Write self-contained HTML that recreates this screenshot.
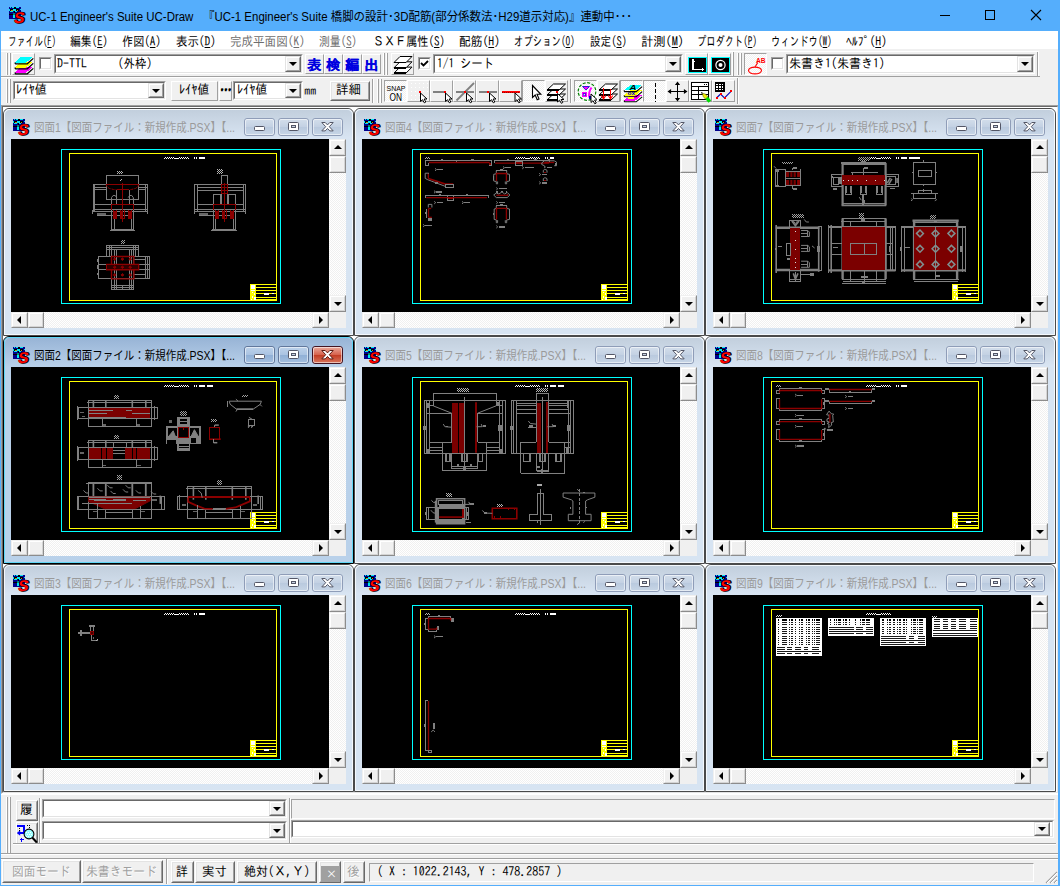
<!DOCTYPE html>
<html lang="ja"><head><meta charset="utf-8"><title>UC-1 Engineer's Suite UC-Draw</title>
<style>
*{box-sizing:border-box;margin:0;padding:0}
html,body{width:1060px;height:886px;overflow:hidden;background:#f0f0f0}
body{position:relative;font-family:"IPAGothic","Liberation Mono","Noto Sans CJK JP",monospace;font-size:12px;color:#000;line-height:1}
.a{position:absolute}
.t{position:absolute;white-space:nowrap;transform-origin:0 0;line-height:12px;height:12px}
.ui{font-family:"Liberation Sans","Noto Sans CJK JP",sans-serif}
#title{left:0;top:0;width:1060px;height:31px;background:#55aefc}
#menu{left:1px;top:31px;width:1058px;height:18px;background:#fff}
.sunk{border:1px solid;border-color:#a0a0a0 #fff #fff #a0a0a0;background:#fff}
.sunk>i{position:absolute;left:0;top:0;right:0;bottom:0;border:1px solid;border-color:#696969 #e3e3e3 #e3e3e3 #696969}
.btn{background:#f0f0f0;border:1px solid;border-color:#fff #696969 #696969 #fff}
.btn>i{position:absolute;left:0;top:0;right:0;bottom:0;border:1px solid;border-color:#e3e3e3 #a0a0a0 #a0a0a0 #e3e3e3}
.btn2{background:#f0f0f0;border:1px solid;border-color:#fff #a0a0a0 #a0a0a0 #fff}
.press{border:1px solid;border-color:#a0a0a0 #fff #fff #a0a0a0;background-color:#f8f8f8;background-image:conic-gradient(#fff 25%,#f0f0f0 0 50%,#fff 0 75%,#f0f0f0 0);background-size:2px 2px}
.dd{background:#f0f0f0;border:1px solid;border-color:#e3e3e3 #696969 #696969 #e3e3e3}
.dd>i{position:absolute;left:0;top:0;right:0;bottom:0;border:1px solid;border-color:#fff #a0a0a0 #a0a0a0 #fff}
.dd>b{position:absolute;left:50%;top:50%;margin:-2px 0 0 -4px;width:0;height:0;border:4px solid transparent;border-top-color:#000;border-bottom:0}
.grip{width:2px;border-left:1px solid #fff;border-right:1px solid #a0a0a0}
.win{background:#d7e4f2;border:1px solid #4a4a4a;border-radius:6px 6px 0 0}
.win>.hl{position:absolute;left:0;top:0;right:0;bottom:0;border:1px solid #f4f8fc;border-radius:5px 5px 0 0}
.win>.cap{position:absolute;left:1px;right:1px;top:1px;height:29px;border-radius:5px 5px 0 0;background:linear-gradient(#c2cfdd,#d9e5f3)}
.win.act{background:#b9d1ea;border-color:#000}
.win.act>.hl{border-color:#5fd6f6}
.win.act>.cap{background:linear-gradient(#98b4d6,#b9d1ea)}
.win .ttl{position:absolute;left:30px;top:12px;font-family:"Liberation Sans","Noto Sans CJK JP",sans-serif;font-size:12px;line-height:14px;color:#9a9a9a;white-space:nowrap;transform-origin:0 0}
.win.act .ttl{color:#000}
.cb{position:absolute;top:9px;height:18px;width:31px;border:1px solid #8f9db8;border-radius:3px;background:linear-gradient(#d3deeb,#c3d1e3 50%,#b9c9de 50%,#c7d5e6)}
.cb>u{position:absolute;left:0;top:0;right:0;bottom:0;border:1px solid rgba(255,255,255,.55);border-radius:2px}
.win.act .cb{border-color:#62789c;background:linear-gradient(#bdd2ea,#a9c3e2 50%,#90b0d6 50%,#a5c0e0)}
.cb>svg{top:1px !important}
.win.act .cb.red{border-color:#431422;background:linear-gradient(#e9a99c,#d6604a 50%,#c23b22 50%,#d8755c)}
.canvas{position:absolute;background:#000;overflow:hidden}
.sb{position:absolute;background-color:#f8f8f8;background-image:conic-gradient(#fff 25%,#f0f0f0 0 50%,#fff 0 75%,#f0f0f0 0);background-size:2px 2px}
.sbb{position:absolute;background:#f0f0f0;border:1px solid;border-color:#f0f0f0 #8c8c8c #8c8c8c #f0f0f0}
.sbb>i{position:absolute;left:0;top:0;right:0;bottom:0;border:1px solid;border-color:#fff #d4d4d4 #d4d4d4 #fff}
.sbb>b{position:absolute;left:50%;top:50%;width:0;height:0;border:4px solid transparent}
.sbb>b.u{margin:-3px 0 0 -4px;border-bottom-color:#000;border-top:0}
.sbb>b.d{margin:-2px 0 0 -4px;border-top-color:#000;border-bottom:0}
.sbb>b.l{margin:-4px 0 0 -3px;border-right-color:#000;border-left:0}
.sbb>b.r{margin:-4px 0 0 -2px;border-left-color:#000;border-right:0}
svg{position:absolute;left:0;top:0;overflow:visible}
</style></head>
<body>
<svg width="0" height="0" style="position:absolute"><defs><pattern id="hxw" width="2" height="2" patternUnits="userSpaceOnUse"><rect width="1" height="1" fill="#fff"/><rect x="1" y="1" width="1" height="1" fill="#fff"/></pattern><pattern id="hx9" width="2" height="2" patternUnits="userSpaceOnUse"><rect width="1" height="1" fill="#a0a0a0"/><rect x="1" y="1" width="1" height="1" fill="#a0a0a0"/></pattern><pattern id="hxa" width="2" height="2" patternUnits="userSpaceOnUse"><rect width="1" height="1" fill="#b4b4b4"/><rect x="1" y="1" width="1" height="1" fill="#b4b4b4"/></pattern><pattern id="hxd" width="2" height="2" patternUnits="userSpaceOnUse"><rect width="1" height="1" fill="#e0e0e0"/><rect x="1" y="1" width="1" height="1" fill="#e0e0e0"/></pattern></defs></svg>
<div class="a" id="title"></div>
<svg class="a" style="left:9px;top:7px" width="16" height="16" viewBox="0 0 16 16"><rect x="0" y="0" width="12" height="12" fill="#00008c"/><path d="M1 0h1v1h-1zM3 0h2v1h-2zM7 0h3v1h-3zM0 2h1v2h-1zM4 2h3v2h-3zM11 2h1v1h-1zM1 4h3v1h-3zM6 4h2v1h-2zM4 8h2v3h-2zM5 6h1v1h-1z" fill="#00e8f0"/><path d="M5 0h2v2h-2zM1 2h3v2h-3zM7 2h3v2h-3zM0 7h4v1h-4zM5 4h1v2h-1z" fill="#000"/><path d="M2 3h2v1h-2zM8 3h1v1h-1z" fill="#b89020"/><path d="M4 6h2v2h-2z" fill="#008878"/><g transform="translate(3.5 0) skewX(-10)"><text x="4.6" y="16.2" font-family="Liberation Sans,sans-serif" font-size="15.5" font-weight="bold" fill="#000" stroke="#000" stroke-width="1.1">S</text><text x="3.6" y="15.6" font-family="Liberation Sans,sans-serif" font-size="15.5" font-weight="bold" fill="#f00">S</text></g></svg>
<span class="t ui" id="ttxt" style="left:30px;top:10px;line-height:15px;height:15px;transform:scaleX(0.9555)">UC-1 Engineer's Suite UC-Draw&nbsp;&nbsp;&nbsp;『UC-1 Engineer's Suite 橋脚の設計･3D配筋(部分係数法･H29道示対応)』連動中･･･</span>
<svg class="a" style="left:930px;top:0" width="130" height="31" viewBox="0 0 130 31" shape-rendering="crispEdges"><path d="M10 15.5h10M55.5 10.5h9v9h-9z" stroke="#000" fill="none"/><path d="M101 10l10 10M111 10l-10 10" stroke="#000" fill="none" shape-rendering="auto" stroke-width="1.1"/></svg>
<div class="a" id="menu"></div>
<span class="t" id="t1" style="left:7.5px;top:34.5px;font-size:13px;line-height:13px;height:13px;transform:scaleX(0.6713);">ファイル(<u>F</u>)</span>
<span class="t" id="t2" style="left:69.5px;top:34.5px;font-size:13px;line-height:13px;height:13px;transform:scaleX(0.8352);">編集(<u>E</u>)</span>
<span class="t" id="t3" style="left:121.5px;top:34.5px;font-size:13px;line-height:13px;height:13px;transform:scaleX(0.8571);">作図(<u>A</u>)</span>
<span class="t" id="t4" style="left:175.5px;top:34.5px;font-size:13px;line-height:13px;height:13px;transform:scaleX(0.8791);">表示(<u>D</u>)</span>
<span class="t" id="t5" style="left:229.5px;top:34.5px;font-size:13px;line-height:13px;height:13px;transform:scaleX(0.8876);color:#6d6d6d;">完成平面図(<u>K</u>)</span>
<span class="t" id="t6" style="left:318.5px;top:34.5px;font-size:13px;line-height:13px;height:13px;transform:scaleX(0.8352);color:#6d6d6d;">測量(<u>S</u>)</span>
<span class="t" id="t7" style="left:372.5px;top:34.5px;font-size:13px;line-height:13px;height:13px;transform:scaleX(0.8521);">ＳＸＦ属性(<u>S</u>)</span>
<span class="t" id="t8" style="left:458.5px;top:34.5px;font-size:13px;line-height:13px;height:13px;transform:scaleX(0.9011);">配筋(<u>H</u>)</span>
<span class="t" id="t9" style="left:513.5px;top:34.5px;font-size:13px;line-height:13px;height:13px;transform:scaleX(0.7219);">オプション(<u>O</u>)</span>
<span class="t" id="t10" style="left:589.5px;top:34.5px;font-size:13px;line-height:13px;height:13px;transform:scaleX(0.8132);">設定(<u>S</u>)</span>
<span class="t" id="t11" style="left:640.5px;top:34.5px;font-size:13px;line-height:13px;height:13px;transform:scaleX(0.9451);">計測(<u>M</u>)</span>
<span class="t" id="t12" style="left:696.5px;top:34.5px;font-size:13px;line-height:13px;height:13px;transform:scaleX(0.7101);">プロダクト(<u>P</u>)</span>
<span class="t" id="t13" style="left:770.5px;top:34.5px;font-size:13px;line-height:13px;height:13px;transform:scaleX(0.7219);">ウィンドウ(<u>W</u>)</span>
<span class="t" id="t14" style="left:845.5px;top:34.5px;font-size:13px;line-height:13px;height:13px;transform:scaleX(0.9011);">ﾍﾙﾌﾟ(<u>H</u>)</span>
<div class="a" style="left:1px;top:51px;width:1038px;height:1px;background:#fff"></div>
<div class="a" style="left:1px;top:76px;width:1039px;height:1px;background:#a0a0a0"></div>
<div class="a" style="left:1px;top:77px;width:737px;height:1px;background:#fff"></div>
<div class="a grip" style="left:6px;top:53px;height:22px"></div>
<div class="a grip" style="left:9px;top:53px;height:22px"></div>
<div class="a btn2" style="left:12px;top:53px;width:23px;height:22px"><i></i></div>
<svg class="a" style="left:12px;top:53px" width="24" height="24" viewBox="0 0 24 24" shape-rendering="crispEdges"><path d="M9 14h11.5l-6.3 5.6h-11.5z" fill="#f0f"/><path d="M2.7 19.6l1 1.2h11.6l6-5.4" fill="none" stroke="#000" stroke-width="1.2" shape-rendering="auto"/><path d="M9 9h11.5l-6.3 5.6h-11.5z" fill="#ff0"/><path d="M2.7 14.6l1 1.2h11.6l6-5.4" fill="none" stroke="#000" stroke-width="1.2" shape-rendering="auto"/><path d="M9 4h11.5l-6.3 5.6h-11.5z" fill="#0ff"/><path d="M2.7 9.6l1 1.2h11.6l6-5.4" fill="none" stroke="#000" stroke-width="1.2" shape-rendering="auto"/></svg>
<div class="a sunk" style="left:39px;top:57px;width:13px;height:13px"><i></i></div>
<div class="a sunk" style="left:54px;top:54px;width:249px;height:20px"><i></i></div>
<div class="a dd" style="left:285px;top:56px;width:16px;height:16px"><i></i><b></b></div>
<span class="t" id="t15" style="left:57.3px;top:57.0px;font-size:13px;line-height:13px;height:13px;transform:scaleX(0.9231);">D-TTL</span>
<span class="t" id="t16" style="left:112.0px;top:57.0px;font-size:13px;line-height:13px;height:13px;transform:scaleX(0.8846);">（外枠）</span>
<div class="a btn2" style="left:305px;top:54px;width:19px;height:20px"><i></i></div>
<span class="t " style="left:307px;top:58px;font-size:14px;line-height:14px;height:14px;font-weight:bold;color:#0000e0;text-shadow:.5px 0 0 #0000e0">表</span>
<div class="a btn2" style="left:324px;top:54px;width:19px;height:20px"><i></i></div>
<span class="t " style="left:326px;top:58px;font-size:14px;line-height:14px;height:14px;font-weight:bold;color:#0000e0;text-shadow:.5px 0 0 #0000e0">検</span>
<div class="a btn2" style="left:343px;top:54px;width:19px;height:20px"><i></i></div>
<span class="t " style="left:345px;top:58px;font-size:14px;line-height:14px;height:14px;font-weight:bold;color:#0000e0;text-shadow:.5px 0 0 #0000e0">編</span>
<div class="a btn2" style="left:362px;top:54px;width:19px;height:20px"><i></i></div>
<span class="t " style="left:364px;top:58px;font-size:14px;line-height:14px;height:14px;font-weight:bold;color:#0000e0;text-shadow:.5px 0 0 #0000e0">出</span>
<div class="a grip" style="left:383px;top:53px;height:22px"></div>
<div class="a grip" style="left:386px;top:53px;height:22px"></div>
<div class="a btn2" style="left:391px;top:53px;width:23px;height:22px"><i></i></div>
<svg class="a" style="left:391px;top:53px" width="24" height="24" viewBox="0 0 24 24" shape-rendering="crispEdges"><path d="M9 14.1h12l-6 6h-12z" fill="#fff" stroke="#000" stroke-width="1" shape-rendering="auto"/><path d="M3 20.1h12" stroke="#000" stroke-width="1.6"/><path d="M9 8.8h12l-6 6h-12z" fill="#fff" stroke="#000" stroke-width="1" shape-rendering="auto"/><path d="M3 14.8h12" stroke="#000" stroke-width="1.6"/><path d="M9 3.5h12l-6 6h-12z" fill="#fff" stroke="#000" stroke-width="1" shape-rendering="auto"/><path d="M3 9.5h12" stroke="#000" stroke-width="1.6"/></svg>
<div class="a sunk" style="left:418px;top:57px;width:13px;height:13px"><i></i><svg width="11" height="11" viewBox="0 0 11 11" style="left:0;top:0"><path d="M2 5l2.5 2.5L9 3" stroke="#000" stroke-width="1.8" fill="none"/></svg></div>
<div class="a sunk" style="left:433px;top:54px;width:250px;height:20px"><i></i></div>
<div class="a dd" style="left:665px;top:56px;width:16px;height:16px"><i></i><b></b></div>
<span class="t" id="t17" style="left:437.0px;top:57.0px;font-size:13px;line-height:13px;height:13px;transform:scaleX(0.8800);">1/1 シート</span>
<div class="a btn2" style="left:685px;top:53px;width:23px;height:22px"><i></i></div>
<svg class="a" style="left:685px;top:53px" width="24" height="24" viewBox="0 0 24 24" shape-rendering="crispEdges"><rect x="3.5" y="4.5" width="18" height="15" fill="#000" stroke="#0ff"/><path d="M8 6v10.5h11M6.5 8.5h3M17.5 15v3" stroke="#fff" stroke-width="1.2" fill="none"/><path d="M17 15l2.5 1.5-2.5 1.5z" fill="#fff"/></svg>
<div class="a btn2" style="left:708px;top:53px;width:23px;height:22px"><i></i></div>
<svg class="a" style="left:708px;top:53px" width="24" height="24" viewBox="0 0 24 24" shape-rendering="crispEdges"><rect x="3.5" y="4.5" width="18" height="15" fill="#000" stroke="#0ff"/><circle cx="12.5" cy="12" r="4.6" fill="none" stroke="#fff" stroke-width="1.2" shape-rendering="auto"/><circle cx="12.5" cy="12" r="2" fill="#fff" shape-rendering="auto"/></svg>
<div class="a" style="left:732px;top:52px;width:1px;height:24px;background:#fff"></div><div class="a" style="left:733px;top:52px;width:1px;height:24px;background:#a0a0a0"></div>
<div class="a grip" style="left:737px;top:53px;height:22px"></div>
<div class="a grip" style="left:740px;top:53px;height:22px"></div>
<div class="a press" style="left:744px;top:53px;width:23px;height:22px"></div>
<svg class="a" style="left:744px;top:53px" width="24" height="24" viewBox="0 0 24 24" shape-rendering="crispEdges"><ellipse cx="11" cy="17.5" rx="6.5" ry="3.4" fill="none" stroke="#f00" stroke-width="1.1" shape-rendering="auto"/><path d="M11 14l2.8-4.5" stroke="#f00" stroke-width="1.1" shape-rendering="auto"/><text x="12" y="9.5" font-family="Liberation Sans,sans-serif" font-size="8" font-weight="bold" fill="#f00" textLength="9.5" lengthAdjust="spacingAndGlyphs">AB</text></svg>
<div class="a sunk" style="left:771px;top:57px;width:13px;height:13px"><i></i></div>
<div class="a sunk" style="left:786px;top:54px;width:249px;height:20px"><i></i></div>
<div class="a dd" style="left:1017px;top:56px;width:16px;height:16px"><i></i><b></b></div>
<span class="t" id="t18" style="left:789.1px;top:57.0px;font-size:13px;line-height:13px;height:13px;transform:scaleX(0.9240);">朱書き1(朱書き1)</span>
<div class="a" style="left:1037px;top:52px;width:1px;height:24px;background:#a0a0a0"></div><div class="a" style="left:1038px;top:52px;width:1px;height:24px;background:#fff"></div>
<div class="a grip" style="left:6px;top:79px;height:24px"></div>
<div class="a grip" style="left:9px;top:79px;height:24px"></div>
<div class="a sunk" style="left:13px;top:81px;width:153px;height:19px"><i></i></div>
<div class="a dd" style="left:148px;top:83px;width:16px;height:15px"><i></i><b></b></div>
<span class="t" id="t19" style="left:15.7px;top:82.5px;font-size:13px;line-height:13px;height:13px;transform:scaleX(0.9538);">ﾚｲﾔ値</span>
<div class="a btn2" style="left:171px;top:81px;width:47px;height:20px"><i></i></div>
<span class="t" id="t20" style="left:179.2px;top:82.5px;font-size:13px;line-height:13px;height:13px;transform:scaleX(0.9385);">ﾚｲﾔ値</span>
<div class="a btn2" style="left:219px;top:81px;width:13px;height:20px"><i></i></div>
<span class="t " style="left:219.5px;top:83px;transform:scaleX(0.9500);font-size:12px;font-weight:bold;text-shadow:0 .6px 0 #000,.5px 0 0 #000">…</span>
<div class="a sunk" style="left:233px;top:81px;width:70px;height:19px"><i></i></div>
<div class="a dd" style="left:285px;top:83px;width:16px;height:15px"><i></i><b></b></div>
<span class="t" id="t21" style="left:236.9px;top:82.5px;font-size:13px;line-height:13px;height:13px;transform:scaleX(0.9385);">ﾚｲﾔ値</span>
<span class="t" id="t22" style="left:304.2px;top:83.5px;font-size:12px;line-height:12px;height:12px;transform:scaleX(1.0000);">mm</span>
<div class="a btn" style="left:330px;top:81px;width:40px;height:20px"><i></i></div>
<span class="t" id="t23" style="left:335.9px;top:83.0px;font-size:13px;line-height:13px;height:13px;transform:scaleX(0.9577);">詳細</span>
<div class="a" style="left:372px;top:79px;width:1px;height:24px;background:#a0a0a0"></div><div class="a" style="left:373px;top:79px;width:1px;height:24px;background:#fff"></div>
<div class="a grip" style="left:377px;top:79px;height:24px"></div>
<div class="a grip" style="left:380px;top:79px;height:24px"></div>
<div class="a press" style="left:384px;top:80px;width:23px;height:22px"></div>
<svg class="a" style="left:384px;top:80px" width="24" height="24" viewBox="0 0 24 24" shape-rendering="crispEdges"><text x="2.5" y="10.5" font-family="Liberation Sans,sans-serif" font-size="7.5" fill="#000" textLength="19" lengthAdjust="spacingAndGlyphs">SNAP</text><text x="5.5" y="20.8" font-family="Liberation Sans,sans-serif" font-size="10" fill="#000" textLength="12.5" lengthAdjust="spacingAndGlyphs">ON</text></svg>
<div class="a btn2" style="left:407px;top:80px;width:23px;height:22px"><i></i></div>
<svg class="a" style="left:407px;top:80px" width="24" height="24" viewBox="0 0 24 24" shape-rendering="crispEdges"><path d="M4 3h1v1h-1zM4 7h1v1h-1zM4 11h1v1h-1zM4 15h1v1h-1zM4 19h1v1h-1zM8 3h1v1h-1zM8 7h1v1h-1zM8 11h1v1h-1zM8 15h1v1h-1zM8 19h1v1h-1zM12 3h1v1h-1zM12 7h1v1h-1zM12 11h1v1h-1zM12 15h1v1h-1zM12 19h1v1h-1zM16 3h1v1h-1zM16 7h1v1h-1zM16 11h1v1h-1zM16 15h1v1h-1zM16 19h1v1h-1zM20 3h1v1h-1zM20 7h1v1h-1zM20 11h1v1h-1zM20 15h1v1h-1zM20 19h1v1h-1z" fill="#fff"/><rect x="12" y="11" width="2" height="2" fill="#f00"/><path d="M13.5 13.0 L13.5 21.5 L15.5 19.7 L17.3 22.8 L18.8 22.0 L17.1 19.0 L20.0 19.0Z" fill="#fff" stroke="#000" stroke-width="1" shape-rendering="auto"/></svg>
<div class="a btn2" style="left:430px;top:80px;width:23px;height:22px"><i></i></div>
<svg class="a" style="left:430px;top:80px" width="24" height="24" viewBox="0 0 24 24" shape-rendering="crispEdges"><path d="M3 11h12v2h-12z" fill="#808080"/><rect x="14" y="11" width="2" height="2" fill="#f00"/><path d="M15.5 13.0 L15.5 21.5 L17.5 19.7 L19.3 22.8 L20.8 22.0 L19.1 19.0 L22.0 19.0Z" fill="#fff" stroke="#000" stroke-width="1" shape-rendering="auto"/></svg>
<div class="a btn2" style="left:453px;top:80px;width:23px;height:22px"><i></i></div>
<svg class="a" style="left:453px;top:80px" width="24" height="24" viewBox="0 0 24 24" shape-rendering="crispEdges"><path d="M3 11h18v2h-18z" fill="#808080"/><path d="M3.5 20.5L21 3" stroke="#808080" stroke-width="1.8" shape-rendering="auto"/><rect x="11" y="11" width="2" height="2" fill="#f00"/><path d="M13.5 13.0 L13.5 21.5 L15.5 19.7 L17.3 22.8 L18.8 22.0 L17.1 19.0 L20.0 19.0Z" fill="#fff" stroke="#000" stroke-width="1" shape-rendering="auto"/></svg>
<div class="a btn2" style="left:476px;top:80px;width:23px;height:22px"><i></i></div>
<svg class="a" style="left:476px;top:80px" width="24" height="24" viewBox="0 0 24 24" shape-rendering="crispEdges"><path d="M3 11h18v2h-18z" fill="#808080"/><rect x="11" y="11" width="2" height="2" fill="#f00"/><path d="M13.5 13.0 L13.5 21.5 L15.5 19.7 L17.3 22.8 L18.8 22.0 L17.1 19.0 L20.0 19.0Z" fill="#fff" stroke="#000" stroke-width="1" shape-rendering="auto"/></svg>
<div class="a btn2" style="left:499px;top:80px;width:23px;height:22px"><i></i></div>
<svg class="a" style="left:499px;top:80px" width="24" height="24" viewBox="0 0 24 24" shape-rendering="crispEdges"><path d="M3 11h18v2h-18z" fill="#f00"/><path d="M3 12h1v1h-1zM5 12h1v1h-1zM7 12h1v1h-1zM9 12h1v1h-1zM11 12h1v1h-1zM13 12h1v1h-1zM15 12h1v1h-1zM17 12h1v1h-1zM19 12h1v1h-1z" fill="#900"/><path d="M16.0 13.0 L16.0 21.5 L18.0 19.7 L19.8 22.8 L21.3 22.0 L19.6 19.0 L22.5 19.0Z" fill="#fff" stroke="#000" stroke-width="1" shape-rendering="auto"/></svg>
<div class="a press" style="left:522px;top:80px;width:23px;height:22px"></div>
<svg class="a" style="left:522px;top:80px" width="24" height="24" viewBox="0 0 24 24" shape-rendering="crispEdges"><path d="M10.5 5.5v12l2.7-2.5 2 4.7 1.8-.8-2-4.6h3.8z" fill="#fff" stroke="#000" stroke-width="1.1" shape-rendering="auto"/></svg>
<div class="a btn2" style="left:545px;top:80px;width:23px;height:22px"><i></i></div>
<svg class="a" style="left:545px;top:80px" width="24" height="24" viewBox="0 0 24 24" shape-rendering="crispEdges"><path d="M8.5 14h12l-6.5 6h-12z" fill="#fff" stroke="#000" stroke-width="1" shape-rendering="auto"/><path d="M2 20h12" stroke="#000" stroke-width="1.2"/><path d="M8.5 9h12l-6.5 6h-12z" fill="#fff" stroke="#000" stroke-width="1" shape-rendering="auto"/><path d="M2 15h12" stroke="#000" stroke-width="1.2"/><path d="M8.5 4h12l-6.5 6h-12z" fill="#fff" stroke="#000" stroke-width="1" shape-rendering="auto"/><path d="M2 10h12" stroke="#000" stroke-width="1.2"/><rect x="11" y="11" width="2" height="2" fill="#f00"/><path d="M12.5 13.5 L12.5 22.0 L14.5 20.2 L16.3 23.3 L17.8 22.5 L16.1 19.5 L19.0 19.5Z" fill="#fff" stroke="#000" stroke-width="1" shape-rendering="auto"/></svg>
<div class="a" style="left:570px;top:79px;width:1px;height:24px;background:#a0a0a0"></div><div class="a" style="left:571px;top:79px;width:1px;height:24px;background:#fff"></div>
<div class="a press" style="left:574px;top:80px;width:23px;height:22px"></div>
<svg class="a" style="left:574px;top:80px" width="24" height="24" viewBox="0 0 24 24" shape-rendering="crispEdges"><circle cx="13" cy="11.5" r="8.8" fill="none" stroke="#008000" stroke-width="1.2" stroke-dasharray="3 1.6" shape-rendering="auto"/><path d="M8.5 6.5h7l-3.6 3.6z" fill="#f0f" stroke="#00c" stroke-width=".8" shape-rendering="auto"/><rect x="7.5" y="12" width="5" height="5" fill="#f0f"/><rect x="9" y="13.5" width="2" height="2" fill="#dde" stroke="#00c" stroke-width=".6"/><path d="M17.5 7.5q-3.2 4.5-2.2 10" fill="none" stroke="#f0f" stroke-width="2" shape-rendering="auto"/><path d="M16 15.5v3" stroke="#00c" stroke-width="1.2"/><path d="M17.0 14.0 L17.0 22.5 L19.0 20.7 L20.8 23.8 L22.3 23.0 L20.6 20.0 L23.5 20.0Z" fill="#fff" stroke="#000" stroke-width="1" shape-rendering="auto"/></svg>
<div class="a btn2" style="left:597px;top:80px;width:23px;height:22px"><i></i></div>
<svg class="a" style="left:597px;top:80px" width="24" height="24" viewBox="0 0 24 24" shape-rendering="crispEdges"><path d="M8.5 14h12l-6.5 6h-12z" fill="#fff" stroke="#000" stroke-width="1" shape-rendering="auto"/><path d="M2 20h12" stroke="#000" stroke-width="1.2"/><path d="M8.5 9h12l-6.5 6h-12z" fill="#fff" stroke="#000" stroke-width="1" shape-rendering="auto"/><path d="M2 15h12" stroke="#000" stroke-width="1.2"/><path d="M8.5 4h12l-6.5 6h-12z" fill="#fff" stroke="#000" stroke-width="1" shape-rendering="auto"/><path d="M2 10h12" stroke="#000" stroke-width="1.2"/><path d="M6.5 8v10M13.5 9v9" stroke="#f00" stroke-width="1.2"/><path d="M4.3 15.5l2.2 3.5 2.2-3.5M11.3 15.5l2.2 3.5 2.2-3.5" stroke="#f00" stroke-width="1.1" fill="none" shape-rendering="auto"/></svg>
<div class="a press" style="left:620px;top:80px;width:23px;height:22px"></div>
<svg class="a" style="left:620px;top:80px" width="24" height="24" viewBox="0 0 24 24" shape-rendering="crispEdges"><path d="M10.5 15.2h11.5l-6.6 5.4h-11.5z" fill="#f0f"/><path d="M3.9 20.6l.8 1.2h11.5l6-5" fill="none" stroke="#000" stroke-width="1.1" shape-rendering="auto"/><path d="M10.5 10.1h11.5l-6.6 5.4h-11.5z" fill="#ff0"/><path d="M3.9 15.5l.8 1.2h11.5l6-5" fill="none" stroke="#000" stroke-width="1.1" shape-rendering="auto"/><path d="M10.5 5h11.5l-6.6 5.4h-11.5z" fill="#0ff"/><path d="M3.9 10.4l.8 1.2h11.5l6-5" fill="none" stroke="#000" stroke-width="1.1" shape-rendering="auto"/><text x="9.5" y="10" font-family="Liberation Sans,sans-serif" font-size="7.5" font-weight="bold" font-style="italic" fill="#000" textLength="7" lengthAdjust="spacingAndGlyphs">A</text><text x="7.5" y="14.8" font-family="Liberation Sans,sans-serif" font-size="6" font-weight="bold" fill="#00c" textLength="7.5" lengthAdjust="spacingAndGlyphs">ox</text><path d="M8 18h6" stroke="#ff0" stroke-width="1.4"/></svg>
<div class="a press" style="left:643px;top:80px;width:23px;height:22px"></div>
<svg class="a" style="left:643px;top:80px" width="24" height="24" viewBox="0 0 24 24" shape-rendering="crispEdges"><path d="M12.5 3v19" stroke="#000" stroke-width="1.2" stroke-dasharray="4 2"/></svg>
<div class="a btn2" style="left:666px;top:80px;width:23px;height:22px"><i></i></div>
<svg class="a" style="left:666px;top:80px" width="24" height="24" viewBox="0 0 24 24" shape-rendering="crispEdges"><path d="M11.5 3.5v16M3.5 11.5h16" stroke="#000" stroke-width="1.2"/><path d="M11.5 1.5l2.6 3.6h-5.2zM11.5 21.5l2.6-3.6h-5.2zM1.5 11.5l3.6-2.6v5.2zM21.5 11.5l-3.6-2.6v5.2z" fill="#000" shape-rendering="auto"/></svg>
<div class="a btn2" style="left:689px;top:80px;width:23px;height:22px"><i></i></div>
<svg class="a" style="left:689px;top:80px" width="24" height="24" viewBox="0 0 24 24" shape-rendering="crispEdges"><rect x="2.5" y="2.5" width="17" height="17" fill="#fff" stroke="#000" stroke-width="1.3"/><path d="M2.5 6.5h17" stroke="#000" stroke-width="1.8"/><path d="M2.5 10.5h17M2.5 14.5h17M9.5 6.5v13" stroke="#000" stroke-width="1.2"/><path d="M15 4h1v1.4h-1zM17 4h1v1.4h-1z" fill="#000"/><path d="M13.5 13.2l3.2 1 2.2 2.6-2.6 2.2-2.2-2.6z" fill="#ee0" stroke="#550" stroke-width=".5" shape-rendering="auto"/><path d="M16.3 19l2.6-2.2 3.3 3.6-2.7 2.4z" fill="#0d0" shape-rendering="auto"/><path d="M11.8 11.8l2.2 1.2-1.2 1z" fill="#000" shape-rendering="auto"/></svg>
<div class="a btn2" style="left:712px;top:80px;width:23px;height:22px"><i></i></div>
<svg class="a" style="left:712px;top:80px" width="24" height="24" viewBox="0 0 24 24" shape-rendering="crispEdges"><rect x="3.5" y="2.5" width="8.5" height="8.5" fill="#fff" stroke="#000" stroke-width="1.2"/><path d="M3.5 5.5h8.5M3.5 8.5h8.5M6.5 2.5v8.5M9.5 2.5v8.5" stroke="#000" stroke-width="1.1"/><path d="M3.5 3.2h8.5" stroke="#000" stroke-width="1.6"/><path d="M4.5 18l4-4 4 4 7-7.2" fill="none" stroke="#00b" stroke-width="1.1" shape-rendering="auto"/><path d="M3.5 17h2v2h-2zM7.5 13h2v2h-2zM11.5 17h2v2h-2zM18.2 9.8h2v2h-2z" fill="#f00"/></svg>
<div class="a" style="left:737px;top:78px;width:1px;height:26px;background:#a0a0a0"></div><div class="a" style="left:738px;top:78px;width:1px;height:26px;background:#fff"></div>
<div class="a" style="left:1px;top:105px;width:1058px;height:689px;background:#fff;border:1px solid;border-color:#a0a0a0 #fff #fff #a0a0a0"></div>
<div class="a" style="left:2px;top:106px;width:1056px;height:687px;background:#fff;border:1px solid;border-color:#696969 #e3e3e3 #e3e3e3 #696969"></div>
<div class="a win" style="left:3px;top:108px;width:351px;height:228px"><div class="hl"></div><div class="cap"></div>
<svg style="left:9px;top:10px" width="16" height="16" viewBox="0 0 16 16"><rect x="0" y="0" width="12" height="12" fill="#00008c"/><path d="M1 0h1v1h-1zM3 0h2v1h-2zM7 0h3v1h-3zM0 2h1v2h-1zM4 2h3v2h-3zM11 2h1v1h-1zM1 4h3v1h-3zM6 4h2v1h-2zM4 8h2v3h-2zM5 6h1v1h-1z" fill="#00e8f0"/><path d="M5 0h2v2h-2zM1 2h3v2h-3zM7 2h3v2h-3zM0 7h4v1h-4zM5 4h1v2h-1z" fill="#000"/><path d="M2 3h2v1h-2zM8 3h1v1h-1z" fill="#b89020"/><path d="M4 6h2v2h-2z" fill="#008878"/><g transform="translate(3.5 0) skewX(-10)"><text x="4.6" y="16.2" font-family="Liberation Sans,sans-serif" font-size="15.5" font-weight="bold" fill="#000" stroke="#000" stroke-width="1.1">S</text><text x="3.6" y="15.6" font-family="Liberation Sans,sans-serif" font-size="15.5" font-weight="bold" fill="#f00">S</text></g></svg>
<span class="ttl" id="w1" style="transform:scaleX(0.8738)">図面1【図面ファイル：新規作成.PSX】【...</span>
<div class="cb" style="left:240px"><u></u><svg width="29" height="15" viewBox="0 0 29 15" style="left:0;top:0"><rect x="9.5" y="6.5" width="10" height="4" rx="1" fill="#fff" stroke="#535666"/></svg></div>
<div class="cb" style="left:274px"><u></u><svg width="29" height="15" viewBox="0 0 29 15" style="left:0;top:0"><rect x="9.5" y="2.5" width="10" height="8" rx="1" fill="#fff" stroke="#535666"/><rect x="12.5" y="5.5" width="4" height="2" fill="#c8d4e4" stroke="#535666"/></svg></div>
<div class="cb" style="left:308px"><u></u><svg width="29" height="15" viewBox="0 0 29 15" style="left:0;top:0"><path d="M8.8 2.5h3.4l2.3 2.4 2.3-2.4h3.4l-3.9 4.2 3.9 4.2h-3.4l-2.3-2.4-2.3 2.4h-3.4l3.9-4.2z" fill="#fff" stroke="#535666" stroke-width="1" shape-rendering="auto"/></svg></div>
<div class="canvas" style="left:7px;top:30px;width:318px;height:173px"><svg width="318" height="173" viewBox="0 0 318 173" shape-rendering="crispEdges"><rect x="50.5" y="10.5" width="219" height="154" fill="none" stroke="#00ffff"/><rect x="58.5" y="14.5" width="207" height="147" fill="none" stroke="#ffff00"/><rect x="239.5" y="145.5" width="26" height="16" fill="none" stroke="#ffff00"/><rect x="239" y="145" width="6" height="17" fill="#ffff00"/><path d="M245 148.5h21M245 151.5h21M245 154.5h21M245 158.5h21M245 160.5h21" stroke="#ffff00"/><path d="M240 146h4v4h-4zM240 151h4v1h-4zM241 153h1v1h-1zM243 154h1v2h-1zM241 157h1v2h-1zM243 158h2v3h-2zM240 160h1v1h-1z" fill="#fff"/><path d="M253 154h5v2h-5zM261 154h2v1h-2z" fill="#fff"/><rect x="153" y="18" width="25" height="2" fill="url(#hxw)"/><rect x="164" y="18" width="3" height="2" fill="#000"/><rect x="164" y="19" width="3" height="1" fill="#fff"/><path d="M183 18h1v2h-1zM185 18h1v2h-1zM188 18h6v2h-6z" fill="#fff"/><path d="M95.2 36.3 L127.7 36.3 L127.7 60.7 L95.2 60.7Z" stroke="#808080" stroke-width="1" fill="none"/><path d="M82.4 45.1 L136.9 45.1 L136.9 72.1 L82.4 72.1Z" stroke="#808080" stroke-width="1" fill="none"/><path d="M83.9 45.1 L83.9 72.1" stroke="#808080" stroke-width="1" fill="none"/><path d="M134.8 45.1 L134.8 72.1" stroke="#808080" stroke-width="1" fill="none"/><path d="M82.4 48.8 L95.2 48.8" stroke="#808080" stroke-width="1" fill="none"/><path d="M127.7 48.8 L136.9 48.8" stroke="#808080" stroke-width="1" fill="none"/><path d="M83.9 50.8 L95.2 50.8" stroke="#808080" stroke-width="1" fill="none"/><path d="M127.7 50.8 L134.8 50.8" stroke="#808080" stroke-width="1" fill="none"/><path d="M83.9 65.4 L100.5 65.4" stroke="#808080" stroke-width="1" fill="none"/><path d="M122.3 65.4 L134.8 65.4" stroke="#808080" stroke-width="1" fill="none"/><path d="M82.4 70.9 L136.9 70.9" stroke="#808080" stroke-width="1" fill="none"/><path d="M81.3 72.1 L137.4 72.1" stroke="#808080" stroke-width="1" fill="none"/><path d="M81.7 71.1 L81.7 74.7" stroke="#808080" stroke-width="1" fill="none"/><path d="M136.0 71.1 L136.0 74.7" stroke="#808080" stroke-width="1" fill="none"/><path d="M100.5 58.6 L100.5 91.8" stroke="#808080" stroke-width="1" fill="none"/><path d="M122.3 58.6 L122.3 91.8" stroke="#808080" stroke-width="1" fill="none"/><path d="M103.1 72.1 L103.1 91.8" stroke="#808080" stroke-width="1" fill="none"/><path d="M120.3 72.1 L120.3 91.8" stroke="#808080" stroke-width="1" fill="none"/><path d="M105.7 50.8 L105.7 65.4" stroke="#808080" stroke-width="1" fill="none"/><path d="M118.2 50.8 L118.2 65.4" stroke="#808080" stroke-width="1" fill="none"/><path d="M100.5 60.7 L100.5 58.6 L102.1 56.5 L104.2 56.5 L105.7 58.6" stroke="#808080" stroke-width="1" fill="none" shape-rendering="auto"/><path d="M122.3 60.7 L122.3 58.6 L120.8 56.5 L118.7 56.5 L117.2 58.6" stroke="#808080" stroke-width="1" fill="none" shape-rendering="auto"/><path d="M98.5 91.8 L123.9 91.8" stroke="#808080" stroke-width="1" fill="none"/><path d="M99.5 90.3 L122.9 90.3" stroke="#808080" stroke-width="1" fill="none"/><path d="M111.1 90.3 L111.1 92.4" stroke="#808080" stroke-width="1" fill="none"/><path d="M85.5 76.1 L117.7 76.1" stroke="#808080" stroke-width="1" fill="none"/><rect x="85.5" y="74.2" width="9.9" height="1.5" fill="#808080" opacity=".8"/><path d="M95.2 45.1 L127.7 45.1" stroke="#8b0000" stroke-width="1" fill="none"/><path d="M105.7 50.8 L118.2 50.8" stroke="#8b0000" stroke-width="1" fill="none"/><path d="M95.2 45.1 L95.9 47.7 L98.5 49.5 L102.6 50.5 L105.7 50.8" stroke="#8b0000" stroke-width="1" fill="none" stroke-dasharray="3 1" shape-rendering="auto"/><path d="M127.7 45.1 L127.0 47.7 L124.4 49.5 L120.3 50.5 L118.2 50.8" stroke="#8b0000" stroke-width="1" fill="none" stroke-dasharray="3 1" shape-rendering="auto"/><path d="M111.4 44.1 L111.4 82.5" stroke="#8b0000" stroke-width="1" fill="none"/><path d="M100.5 65.4 L122.3 65.4" stroke="#8b0000" stroke-width="1" fill="none"/><path d="M100.5 65.4 L100.5 70.9" stroke="#8b0000" stroke-width="1" fill="none"/><path d="M122.3 65.4 L122.3 70.9" stroke="#8b0000" stroke-width="1" fill="none"/><path d="M102.1 70.9 L102.1 79.4 L105.7 79.4 L105.7 70.9" stroke="#8b0000" stroke-width="1" fill="none"/><rect x="102.9" y="72.1" width="1.6" height="6.8" fill="#8b0000"/><path d="M109.4 70.9 L109.4 79.4 L113.5 79.4 L113.5 70.9" stroke="#8b0000" stroke-width="1" fill="none"/><rect x="110.2" y="72.1" width="2.1" height="6.8" fill="#8b0000"/><path d="M117.4 70.9 L117.4 79.4 L120.8 79.4 L120.8 70.9" stroke="#8b0000" stroke-width="1" fill="none"/><rect x="118.2" y="72.1" width="1.3" height="6.8" fill="#8b0000"/><rect x="106" y="32" width="6" height="3" fill="url(#hxa)"/><rect x="109" y="40" width="2" height="2" fill="url(#hxa)"/><path d="M183.9 45.1 L234.8 45.1 L234.8 72.1 L183.9 72.1Z" stroke="#808080" stroke-width="1" fill="none"/><path d="M186.5 45.1 L186.5 72.1" stroke="#808080" stroke-width="1" fill="none"/><path d="M232.2 45.1 L232.2 72.1" stroke="#808080" stroke-width="1" fill="none"/><path d="M186.5 48.2 L232.2 48.2" stroke="#808080" stroke-width="1" fill="none"/><path d="M186.5 51.4 L232.2 51.4" stroke="#808080" stroke-width="1" fill="none"/><path d="M186.5 65.4 L202.4 65.4" stroke="#808080" stroke-width="1" fill="none"/><path d="M224.6 65.4 L232.2 65.4" stroke="#808080" stroke-width="1" fill="none"/><path d="M183.9 70.9 L234.8 70.9" stroke="#808080" stroke-width="1" fill="none"/><path d="M182.9 72.1 L235.3 72.1" stroke="#808080" stroke-width="1" fill="none"/><path d="M183.4 71.1 L183.4 74.7" stroke="#808080" stroke-width="1" fill="none"/><path d="M234.5 71.1 L234.5 74.7" stroke="#808080" stroke-width="1" fill="none"/><path d="M210.4 45.1 L210.4 36.3 L216.9 36.3 L216.9 45.1" stroke="#808080" stroke-width="1" fill="none"/><path d="M210.4 45.1 L210.4 65.4" stroke="#808080" stroke-width="1" fill="none"/><path d="M216.9 45.1 L216.9 65.4" stroke="#808080" stroke-width="1" fill="none"/><path d="M202.4 55.5 L209.9 55.5 L209.9 65.4 L202.4 65.4Z" stroke="#808080" stroke-width="1" fill="none"/><path d="M217.2 55.5 L224.6 55.5 L224.6 65.4 L217.2 65.4Z" stroke="#808080" stroke-width="1" fill="none"/><path d="M202.4 65.4 L202.4 91.8" stroke="#808080" stroke-width="1" fill="none"/><path d="M224.6 65.4 L224.6 91.8" stroke="#808080" stroke-width="1" fill="none"/><path d="M204.9 72.1 L204.9 91.8" stroke="#808080" stroke-width="1" fill="none"/><path d="M222.1 72.1 L222.1 91.8" stroke="#808080" stroke-width="1" fill="none"/><path d="M200.0 91.8 L226.0 91.8" stroke="#808080" stroke-width="1" fill="none"/><path d="M201.1 90.3 L224.9 90.3" stroke="#808080" stroke-width="1" fill="none"/><path d="M213.0 90.3 L213.0 92.4" stroke="#808080" stroke-width="1" fill="none"/><path d="M187.6 76.3 L220.3 76.3" stroke="#808080" stroke-width="1" fill="none"/><rect x="187.6" y="74.2" width="9.3" height="1.8" fill="#808080" opacity=".8"/><path d="M213.5 44.1 L213.5 82.5" stroke="#8b0000" stroke-width="1" fill="none"/><path d="M210.4 45.1 L216.9 45.1 L216.9 54.5 L210.4 54.5Z" stroke="#8b0000" stroke-width="1" fill="none"/><path d="M210.4 48.2 L216.9 48.2" stroke="#8b0000" stroke-width="1" fill="none"/><path d="M210.4 51.4 L216.9 51.4" stroke="#8b0000" stroke-width="1" fill="none"/><path d="M202.4 65.4 L224.6 65.4" stroke="#8b0000" stroke-width="1" fill="none"/><path d="M202.4 65.4 L202.4 70.9" stroke="#8b0000" stroke-width="1" fill="none"/><path d="M224.6 65.4 L224.6 70.9" stroke="#8b0000" stroke-width="1" fill="none"/><path d="M204.2 70.9 L204.2 79.4 L207.8 79.4 L207.8 70.9" stroke="#8b0000" stroke-width="1" fill="none"/><rect x="205.0" y="72.1" width="1.6" height="6.8" fill="#8b0000"/><path d="M211.4 70.9 L211.4 79.4 L215.1 79.4 L215.1 70.9" stroke="#8b0000" stroke-width="1" fill="none"/><rect x="212.3" y="72.1" width="1.5" height="6.8" fill="#8b0000"/><path d="M219.2 70.9 L219.2 79.4 L222.9 79.4 L222.9 70.9" stroke="#8b0000" stroke-width="1" fill="none"/><rect x="220.1" y="72.1" width="1.5" height="6.8" fill="#8b0000"/><rect x="206" y="30" width="6" height="5" fill="url(#hxa)"/><path d="M95.2 106.1 L127.7 106.1 L127.7 110.8 L95.2 110.8Z" stroke="#808080" stroke-width="1" fill="none"/><path d="M95.2 108.2 L127.7 108.2" stroke="#808080" stroke-width="1" fill="none"/><path d="M95.2 106.1 L95.2 117.0" stroke="#808080" stroke-width="1" fill="none"/><path d="M98.0 106.1 L98.0 117.0" stroke="#808080" stroke-width="1" fill="none"/><path d="M100.0 106.1 L100.0 117.0" stroke="#808080" stroke-width="1" fill="none"/><path d="M122.9 106.1 L122.9 117.0" stroke="#808080" stroke-width="1" fill="none"/><path d="M124.9 106.1 L124.9 117.0" stroke="#808080" stroke-width="1" fill="none"/><path d="M127.7 106.1 L127.7 117.0" stroke="#808080" stroke-width="1" fill="none"/><path d="M87.1 117.0 L138.9 117.0 L138.9 139.9 L87.1 139.9Z" stroke="#808080" stroke-width="1" fill="none"/><path d="M134.8 117.0 L134.8 139.9" stroke="#808080" stroke-width="1" fill="none"/><path d="M136.4 117.0 L136.4 139.9" stroke="#808080" stroke-width="1" fill="none"/><path d="M87.1 125.3 L95.6 125.3" stroke="#808080" stroke-width="1" fill="none"/><path d="M87.1 130.5 L95.6 130.5" stroke="#808080" stroke-width="1" fill="none"/><path d="M127.7 125.3 L138.9 125.3" stroke="#808080" stroke-width="1" fill="none"/><path d="M127.7 130.5 L138.9 130.5" stroke="#808080" stroke-width="1" fill="none"/><path d="M122.9 120.1 L134.8 120.1" stroke="#808080" stroke-width="1" fill="none"/><path d="M122.9 135.9 L134.8 135.9" stroke="#808080" stroke-width="1" fill="none"/><path d="M100.3 110.8 L100.3 150.7" stroke="#808080" stroke-width="1" fill="none"/><path d="M103.1 110.8 L103.1 150.7" stroke="#808080" stroke-width="1" fill="none"/><path d="M105.2 110.8 L105.2 150.7" stroke="#808080" stroke-width="1" fill="none"/><path d="M118.2 110.8 L118.2 150.7" stroke="#808080" stroke-width="1" fill="none"/><path d="M120.3 110.8 L120.3 150.7" stroke="#808080" stroke-width="1" fill="none"/><path d="M122.9 110.8 L122.9 150.7" stroke="#808080" stroke-width="1" fill="none"/><path d="M100.3 146.1 L122.9 146.1" stroke="#808080" stroke-width="1" fill="none"/><path d="M100.3 148.2 L122.9 148.2" stroke="#808080" stroke-width="1" fill="none"/><path d="M100.3 150.7 L122.9 150.7" stroke="#808080" stroke-width="1" fill="none"/><path d="M111.1 146.1 L111.1 150.7" stroke="#808080" stroke-width="1" fill="none"/><path d="M95.2 110.8 L95.2 117.0" stroke="#808080" stroke-width="1" fill="none"/><path d="M127.7 110.8 L127.7 117.0" stroke="#808080" stroke-width="1" fill="none"/><path d="M100.5 117.5 L122.9 117.5 L122.9 139.9 L100.5 139.9Z" stroke="#8b0000" stroke-width="1.4" fill="none" shape-rendering="auto"/><path d="M95.6 125.3 L127.7 125.3 L127.7 131.0 L95.6 131.0Z" stroke="#8b0000" stroke-width="1.2" fill="#8b0000" shape-rendering="auto"/><rect x="96.4" y="126.2" width="30.5" height="4.0" fill="#300000"/><path d="M102.3 120.1 L103.7 118.8 L105.0 120.1 L103.7 121.5Z" stroke="#8b0000" stroke-width="1" fill="#8b0000" shape-rendering="auto"/><path d="M102.3 128.2 L103.7 126.9 L105.0 128.2 L103.7 129.6Z" stroke="#8b0000" stroke-width="1" fill="#8b0000" shape-rendering="auto"/><path d="M102.3 135.9 L103.7 134.6 L105.0 135.9 L103.7 137.3Z" stroke="#8b0000" stroke-width="1" fill="#8b0000" shape-rendering="auto"/><path d="M110.1 120.1 L111.4 118.8 L112.8 120.1 L111.4 121.5Z" stroke="#8b0000" stroke-width="1" fill="#8b0000" shape-rendering="auto"/><path d="M110.1 128.2 L111.4 126.9 L112.8 128.2 L111.4 129.6Z" stroke="#8b0000" stroke-width="1" fill="#8b0000" shape-rendering="auto"/><path d="M110.1 135.9 L111.4 134.6 L112.8 135.9 L111.4 137.3Z" stroke="#8b0000" stroke-width="1" fill="#8b0000" shape-rendering="auto"/><path d="M117.9 120.1 L119.2 118.8 L120.6 120.1 L119.2 121.5Z" stroke="#8b0000" stroke-width="1" fill="#8b0000" shape-rendering="auto"/><path d="M117.9 128.2 L119.2 126.9 L120.6 128.2 L119.2 129.6Z" stroke="#8b0000" stroke-width="1" fill="#8b0000" shape-rendering="auto"/><path d="M117.9 135.9 L119.2 134.6 L120.6 135.9 L119.2 137.3Z" stroke="#8b0000" stroke-width="1" fill="#8b0000" shape-rendering="auto"/><rect x="110" y="101" width="4" height="4" fill="url(#hx9)"/><path d="M86.2 120.1 L86.2 122.7" stroke="#808080" stroke-width="1" fill="none"/><path d="M86.2 126.4 L86.2 130.0" stroke="#808080" stroke-width="1" fill="none"/><path d="M86.2 134.1 L86.2 136.2" stroke="#808080" stroke-width="1" fill="none"/></svg></div>
<div class="sb" style="left:325px;top:30px;width:17px;height:173px"></div>
<div class="sbb" style="left:325px;top:30px;width:17px;height:17px"><i></i><b class="u"></b></div>
<div class="sbb" style="left:325px;top:47px;width:17px;height:17px"><i></i></div>
<div class="sbb" style="left:325px;top:186px;width:17px;height:17px"><i></i><b class="d"></b></div>
<div class="sb" style="left:7px;top:203px;width:318px;height:16px"></div>
<div class="sbb" style="left:7px;top:203px;width:17px;height:16px"><i></i><b class="l"></b></div>
<div class="sbb" style="left:24px;top:203px;width:16px;height:16px"><i></i></div>
<div class="sbb" style="left:308px;top:203px;width:17px;height:16px"><i></i><b class="r"></b></div>
<div class="a" style="left:325px;top:203px;width:17px;height:16px;background:#f0f0f0"></div>
</div>
<div class="a win act" style="left:3px;top:336px;width:351px;height:228px"><div class="hl"></div><div class="cap"></div>
<svg style="left:9px;top:10px" width="16" height="16" viewBox="0 0 16 16"><rect x="0" y="0" width="12" height="12" fill="#00008c"/><path d="M1 0h1v1h-1zM3 0h2v1h-2zM7 0h3v1h-3zM0 2h1v2h-1zM4 2h3v2h-3zM11 2h1v1h-1zM1 4h3v1h-3zM6 4h2v1h-2zM4 8h2v3h-2zM5 6h1v1h-1z" fill="#00e8f0"/><path d="M5 0h2v2h-2zM1 2h3v2h-3zM7 2h3v2h-3zM0 7h4v1h-4zM5 4h1v2h-1z" fill="#000"/><path d="M2 3h2v1h-2zM8 3h1v1h-1z" fill="#b89020"/><path d="M4 6h2v2h-2z" fill="#008878"/><g transform="translate(3.5 0) skewX(-10)"><text x="4.6" y="16.2" font-family="Liberation Sans,sans-serif" font-size="15.5" font-weight="bold" fill="#000" stroke="#000" stroke-width="1.1">S</text><text x="3.6" y="15.6" font-family="Liberation Sans,sans-serif" font-size="15.5" font-weight="bold" fill="#f00">S</text></g></svg>
<span class="ttl" id="w2" style="transform:scaleX(0.8738)">図面2【図面ファイル：新規作成.PSX】【...</span>
<div class="cb" style="left:240px"><u></u><svg width="29" height="15" viewBox="0 0 29 15" style="left:0;top:0"><rect x="9.5" y="6.5" width="10" height="4" rx="1" fill="#fff" stroke="#535666"/></svg></div>
<div class="cb" style="left:274px"><u></u><svg width="29" height="15" viewBox="0 0 29 15" style="left:0;top:0"><rect x="9.5" y="2.5" width="10" height="8" rx="1" fill="#fff" stroke="#535666"/><rect x="12.5" y="5.5" width="4" height="2" fill="#c8d4e4" stroke="#535666"/></svg></div>
<div class="cb red" style="left:308px"><u></u><svg width="29" height="15" viewBox="0 0 29 15" style="left:0;top:0"><path d="M8.8 2.5h3.4l2.3 2.4 2.3-2.4h3.4l-3.9 4.2 3.9 4.2h-3.4l-2.3-2.4-2.3 2.4h-3.4l3.9-4.2z" fill="#fff" stroke="#5b1a12" stroke-width="1" shape-rendering="auto"/></svg></div>
<div class="canvas" style="left:7px;top:30px;width:318px;height:173px"><svg width="318" height="173" viewBox="0 0 318 173" shape-rendering="crispEdges"><rect x="50.5" y="10.5" width="219" height="154" fill="none" stroke="#00ffff"/><rect x="58.5" y="14.5" width="207" height="147" fill="none" stroke="#ffff00"/><rect x="239.5" y="145.5" width="26" height="16" fill="none" stroke="#ffff00"/><rect x="239" y="145" width="6" height="17" fill="#ffff00"/><path d="M245 148.5h21M245 151.5h21M245 154.5h21M245 158.5h21M245 160.5h21" stroke="#ffff00"/><path d="M240 146h4v4h-4zM240 151h4v1h-4zM241 153h1v1h-1zM243 154h1v2h-1zM241 157h1v2h-1zM243 158h2v3h-2zM240 160h1v1h-1z" fill="#fff"/><path d="M253 154h5v2h-5zM261 154h2v1h-2z" fill="#fff"/><rect x="153" y="18" width="25" height="2" fill="url(#hxw)"/><rect x="164" y="18" width="3" height="2" fill="#000"/><rect x="164" y="19" width="3" height="1" fill="#fff"/><path d="M183 18h1v2h-1zM185 18h1v2h-1zM188 18h6v2h-6z" fill="#fff"/><rect x="196" y="18" width="6" height="2" fill="#fff"/><path d="M77.2 33.7 L140.0 33.7 L140.0 59.6 L77.2 59.6Z" stroke="#808080" stroke-width="1" fill="none"/><path d="M75.6 35.4 L141.0 35.4" stroke="#808080" stroke-width="1" fill="none"/><path d="M82.4 33.7 L82.4 40.4" stroke="#808080" stroke-width="1.6" fill="none" shape-rendering="auto"/><path d="M94.8 33.7 L94.8 40.4" stroke="#808080" stroke-width="1.6" fill="none" shape-rendering="auto"/><path d="M121.3 33.7 L121.3 40.4" stroke="#808080" stroke-width="1.6" fill="none" shape-rendering="auto"/><path d="M134.8 33.7 L134.8 40.4" stroke="#808080" stroke-width="1.6" fill="none" shape-rendering="auto"/><path d="M66.3 40.4 L146.7 40.4 L146.7 51.3 L66.3 51.3Z" stroke="#808080" stroke-width="1" fill="none"/><path d="M67.9 40.4 L67.9 51.3" stroke="#808080" stroke-width="1" fill="none"/><path d="M143.1 39.4 L143.1 53.4" stroke="#808080" stroke-width="1" fill="none"/><path d="M66.3 39.4 L66.3 53.4" stroke="#808080" stroke-width="1" fill="none"/><rect x="77.7" y="40.9" width="61.5" height="9.9" fill="#7b0000"/><path d="M77.7 43.2 L102.1 43.2" stroke="#808080" stroke-width="1" fill="none"/><path d="M115.1 43.2 L120.8 43.2" stroke="#808080" stroke-width="1" fill="none"/><path d="M77.7 46.1 L95.9 46.1" stroke="#808080" stroke-width="1" fill="none"/><path d="M121.3 46.1 L139.2 46.1" stroke="#808080" stroke-width="1" fill="none"/><path d="M77.2 50.8 L115.1 50.8" stroke="#808080" stroke-width="1" fill="none"/><path d="M91.2 51.3 L91.2 59.6" stroke="#808080" stroke-width="1" fill="none"/><path d="M125.5 51.3 L125.5 59.6" stroke="#808080" stroke-width="1" fill="none"/><rect x="103" y="28" width="5" height="4" fill="url(#hx9)"/><rect x="92.2" y="57.0" width="3.2" height="1.6" fill="#808080" opacity=".8"/><rect x="126.0" y="57.0" width="3.1" height="1.6" fill="#808080" opacity=".8"/><rect x="69.4" y="44.6" width="3.1" height="1.5" fill="#808080" opacity=".8"/><rect x="70.5" y="48.7" width="3.1" height="1.4" fill="#808080" opacity=".8"/><path d="M77.2 73.9 L140.0 73.9 L140.0 100.6 L77.2 100.6Z" stroke="#808080" stroke-width="1" fill="none"/><path d="M75.6 75.7 L141.0 75.7" stroke="#808080" stroke-width="1" fill="none"/><path d="M82.4 73.9 L82.4 80.9" stroke="#808080" stroke-width="1.6" fill="none" shape-rendering="auto"/><path d="M94.8 73.9 L94.8 80.9" stroke="#808080" stroke-width="1.6" fill="none" shape-rendering="auto"/><path d="M121.3 73.9 L121.3 80.9" stroke="#808080" stroke-width="1.6" fill="none" shape-rendering="auto"/><path d="M134.8 73.9 L134.8 80.9" stroke="#808080" stroke-width="1.6" fill="none" shape-rendering="auto"/><path d="M102.1 75.7 L102.1 80.9" stroke="#808080" stroke-width="1" fill="none"/><path d="M115.1 75.7 L115.1 80.9" stroke="#808080" stroke-width="1" fill="none"/><path d="M66.3 80.4 L146.7 80.4 L146.7 92.3 L66.3 92.3Z" stroke="#808080" stroke-width="1" fill="none"/><path d="M67.9 80.4 L67.9 92.3" stroke="#808080" stroke-width="1" fill="none"/><path d="M143.1 79.3 L143.1 94.4" stroke="#808080" stroke-width="1" fill="none"/><path d="M66.3 79.3 L66.3 94.4" stroke="#808080" stroke-width="1" fill="none"/><rect x="77.7" y="80.9" width="12.3" height="10.9" fill="#7b0000"/><rect x="91.2" y="80.9" width="3.6" height="10.9" fill="#7b0000"/><rect x="96.2" y="80.9" width="5.9" height="10.9" fill="#7b0000"/><rect x="114.0" y="80.9" width="6.8" height="10.9" fill="#7b0000"/><rect x="122.1" y="80.9" width="2.8" height="10.9" fill="#7b0000"/><rect x="126.0" y="80.9" width="13.2" height="10.9" fill="#7b0000"/><path d="M102.1 83.5 L114.0 83.5" stroke="#808080" stroke-width="1" fill="none"/><path d="M102.1 86.6 L114.0 86.6" stroke="#808080" stroke-width="1" fill="none"/><path d="M91.2 92.3 L91.2 100.6" stroke="#808080" stroke-width="1" fill="none"/><path d="M125.5 92.3 L125.5 100.6" stroke="#808080" stroke-width="1" fill="none"/><rect x="103" y="68" width="5" height="4" fill="url(#hx9)"/><rect x="69.4" y="85.4" width="3.6" height="1.2" fill="#808080" opacity=".8"/><rect x="90.7" y="97.5" width="4.1" height="1.4" fill="#808080" opacity=".8"/><rect x="125.5" y="97.5" width="4.1" height="1.4" fill="#808080" opacity=".8"/><path d="M77.2 115.1 L140.0 115.1 L140.0 151.4 L77.2 151.4Z" stroke="#808080" stroke-width="1" fill="none"/><path d="M75.1 116.1 L141.0 116.1" stroke="#808080" stroke-width="1" fill="none"/><path d="M82.4 115.1 L82.4 130.1" stroke="#808080" stroke-width="1.8" fill="none" shape-rendering="auto"/><path d="M94.8 115.1 L94.8 130.1" stroke="#808080" stroke-width="1.8" fill="none" shape-rendering="auto"/><path d="M121.3 115.1 L121.3 130.1" stroke="#808080" stroke-width="1.8" fill="none" shape-rendering="auto"/><path d="M134.8 115.1 L134.8 130.1" stroke="#808080" stroke-width="1.8" fill="none" shape-rendering="auto"/><path d="M66.3 129.6 L153.5 129.6 L153.5 142.6 L66.3 142.6Z" stroke="#808080" stroke-width="1" fill="none"/><path d="M67.9 129.6 L67.9 142.6" stroke="#808080" stroke-width="1" fill="none"/><path d="M149.3 128.6 L149.3 136.9" stroke="#808080" stroke-width="1.6" fill="none" shape-rendering="auto"/><path d="M150.9 129.6 L150.9 142.6" stroke="#808080" stroke-width="1" fill="none"/><path d="M66.3 128.6 L66.3 136.9" stroke="#808080" stroke-width="1" fill="none"/><path d="M77.7 130.1 L139.2 130.1 L139.2 133.8 L124.4 141.6 L93.3 141.6 L77.7 134.6Z" stroke="#7b0000" stroke-width="1" fill="#7b0000" shape-rendering="auto"/><path d="M77.7 130.1 L139.2 130.1" stroke="#808080" stroke-width="1" fill="none"/><path d="M77.7 132.2 L94.8 132.2" stroke="#808080" stroke-width="1" fill="none"/><path d="M102.1 132.2 L115.1 132.2" stroke="#808080" stroke-width="1" fill="none"/><path d="M82.9 133.8 L115.1 133.8" stroke="#808080" stroke-width="1" fill="none"/><path d="M122.3 133.8 L134.8 133.8" stroke="#808080" stroke-width="1" fill="none"/><path d="M70.5 136.4 L120.8 136.4" stroke="#808080" stroke-width="1" fill="none"/><path d="M86.0 142.6 L86.0 151.4" stroke="#808080" stroke-width="1" fill="none"/><path d="M94.8 142.6 L94.8 151.4" stroke="#808080" stroke-width="1" fill="none"/><path d="M121.3 142.6 L121.3 151.4" stroke="#808080" stroke-width="1" fill="none"/><path d="M129.6 142.6 L129.6 151.4" stroke="#808080" stroke-width="1" fill="none"/><path d="M86.0 136.9 L86.0 142.6" stroke="#808080" stroke-width="1" fill="none"/><path d="M129.6 139.0 L129.6 142.6" stroke="#808080" stroke-width="1" fill="none"/><path d="M94.8 145.2 L122.3 145.2" stroke="#808080" stroke-width="1" fill="none"/><rect x="106" y="108" width="5" height="5" fill="url(#hx9)"/><path d="M72.5 123.4 L75.1 126.0 L77.7 126.0" stroke="#808080" stroke-width="1" fill="none" shape-rendering="auto"/><path d="M86.5 121.3 L89.1 123.9 L91.7 123.9" stroke="#808080" stroke-width="1" fill="none" shape-rendering="auto"/><path d="M96.4 118.2 L99.0 120.8 L101.6 120.8" stroke="#808080" stroke-width="1" fill="none" shape-rendering="auto"/><path d="M99.5 123.9 L102.1 126.5 L104.7 126.5" stroke="#808080" stroke-width="1" fill="none" shape-rendering="auto"/><path d="M112.0 122.4 L114.6 125.0 L117.2 125.0" stroke="#808080" stroke-width="1" fill="none" shape-rendering="auto"/><path d="M114.6 118.2 L117.2 120.8 L119.7 120.8" stroke="#808080" stroke-width="1" fill="none" shape-rendering="auto"/><path d="M124.9 123.4 L127.5 126.0 L130.1 126.0" stroke="#808080" stroke-width="1" fill="none" shape-rendering="auto"/><path d="M140.0 124.4 L142.6 127.0 L145.2 127.0" stroke="#808080" stroke-width="1" fill="none" shape-rendering="auto"/><rect x="82.4" y="143.6" width="3.6" height="1.6" fill="#808080" opacity=".8"/><rect x="129.6" y="144.2" width="4.2" height="1.2" fill="#808080" opacity=".8"/><rect x="141.0" y="131.7" width="5.2" height="1.9" fill="#808080" opacity=".8"/><rect x="165.8" y="50.3" width="13.5" height="33.2" fill="#808080"/><rect x="155.4" y="58.6" width="34.3" height="18.7" fill="#808080"/><rect x="168.9" y="52.4" width="7.3" height="4.1" fill="#000"/><rect x="157.0" y="60.7" width="8.8" height="8.3" fill="#000"/><rect x="179.3" y="61.2" width="8.8" height="7.8" fill="#000"/><rect x="167.9" y="77.3" width="9.8" height="4.1" fill="#000"/><rect x="155.9" y="73.1" width="9.4" height="3.6" fill="#000"/><rect x="179.8" y="71.0" width="5.2" height="5.2" fill="#000"/><path d="M158.0 69.0 L162.2 63.8 L164.2 69.0Z" stroke="#808080" stroke-width="1" fill="#808080" shape-rendering="auto"/><path d="M180.3 69.0 L183.4 62.7 L187.1 69.0Z" stroke="#808080" stroke-width="1" fill="#808080" shape-rendering="auto"/><path d="M168.9 54.4 L176.2 54.4" stroke="#808080" stroke-width="1" fill="none"/><path d="M167.9 79.5 L177.7 79.5" stroke="#808080" stroke-width="1" fill="none"/><rect x="167.1" y="59.8" width="10.8" height="11.0" fill="#8b0000"/><rect x="168.1" y="60.7" width="8.9" height="9.3" fill="#000"/><path d="M172.5 60.1 L172.5 63.3" stroke="#8b0000" stroke-width="1" fill="none"/><rect x="169" y="44" width="7" height="5" fill="url(#hx9)"/><rect x="158.0" y="53.4" width="3.1" height="2.1" fill="#808080" opacity=".8"/><path d="M198.5 60.1 L208.9 60.1 L208.9 72.1 L198.5 72.1Z" stroke="#8b0000" stroke-width="1" fill="none"/><path d="M198.5 72.1 L209.9 72.1" stroke="#8b0000" stroke-width="1.3" fill="none" shape-rendering="auto"/><path d="M203.7 60.1 L203.7 58.1" stroke="#808080" stroke-width="1" fill="none"/><path d="M203.7 58.1 L207.8 58.1" stroke="#808080" stroke-width="1.5" fill="none" shape-rendering="auto"/><path d="M202.6 72.1 L202.6 75.7" stroke="#808080" stroke-width="1" fill="none"/><path d="M202.6 75.7 L206.3 75.7" stroke="#808080" stroke-width="1.5" fill="none" shape-rendering="auto"/><rect x="200" y="52" width="6" height="3" fill="url(#hx9)"/><path d="M218.2 34.2 L250.4 34.2 L249.3 37.3 L242.1 42.2 L225.5 42.2 L219.2 37.3Z" stroke="#808080" stroke-width="1" fill="none" shape-rendering="auto"/><path d="M225.5 42.2 L242.1 42.2" stroke="#808080" stroke-width="1.6" fill="none" shape-rendering="auto"/><path d="M216.6 34.2 L216.6 39.9" stroke="#808080" stroke-width="1" fill="none"/><path d="M224.9 32.1 L227.0 34.2" stroke="#808080" stroke-width="1" fill="none" shape-rendering="auto"/><path d="M226.5 42.2 L224.9 44.6" stroke="#808080" stroke-width="1" fill="none" shape-rendering="auto"/><path d="M248.8 37.3 L250.9 39.4" stroke="#808080" stroke-width="1" fill="none" shape-rendering="auto"/><rect x="231" y="28" width="6" height="2" fill="url(#hx9)"/><path d="M237.4 52.2 L243.6 52.2 L243.6 58.4 L237.4 58.4Z" stroke="#808080" stroke-width="1" fill="none"/><path d="M237.4 58.4 L237.4 60.7 L238.9 58.6" stroke="#808080" stroke-width="1" fill="none" shape-rendering="auto"/><path d="M241.0 58.4 L240.5 60.7 L242.3 58.6" stroke="#808080" stroke-width="1" fill="none" shape-rendering="auto"/><path d="M237.9 50.3 L241.0 52.2" stroke="#808080" stroke-width="1" fill="none" shape-rendering="auto"/><path d="M176.2 119.8 L240.0 119.8 L240.0 151.4 L176.2 151.4Z" stroke="#808080" stroke-width="1" fill="none"/><path d="M175.1 121.1 L241.0 121.1" stroke="#808080" stroke-width="1" fill="none"/><path d="M182.4 119.8 L182.4 132.7" stroke="#808080" stroke-width="1.6" fill="none" shape-rendering="auto"/><path d="M194.8 119.8 L194.8 132.7" stroke="#808080" stroke-width="1.6" fill="none" shape-rendering="auto"/><path d="M221.3 119.8 L221.3 132.7" stroke="#808080" stroke-width="1.6" fill="none" shape-rendering="auto"/><path d="M234.8 119.8 L234.8 132.7" stroke="#808080" stroke-width="1.6" fill="none" shape-rendering="auto"/><path d="M166.3 129.6 L251.9 129.6 L251.9 142.6 L166.3 142.6Z" stroke="#808080" stroke-width="1" fill="none"/><path d="M168.4 129.6 L168.4 142.6" stroke="#808080" stroke-width="1" fill="none"/><path d="M247.2 128.6 L247.2 136.9" stroke="#808080" stroke-width="1.6" fill="none" shape-rendering="auto"/><path d="M249.8 129.6 L249.8 142.6" stroke="#808080" stroke-width="1" fill="none"/><path d="M168.9 128.1 L168.9 136.9" stroke="#808080" stroke-width="1" fill="none"/><path d="M177.2 130.4 L238.9 130.4" stroke="#8b0000" stroke-width="2" fill="none"/><path d="M177.2 130.4 L177.2 134.8 L185.0 138.4 L193.3 141.6 L201.6 141.9" stroke="#8b0000" stroke-width="1.8" fill="none" shape-rendering="auto"/><path d="M238.9 130.4 L238.9 134.3 L230.6 137.9 L224.4 140.5 L214.6 141.9" stroke="#8b0000" stroke-width="1.8" fill="none" shape-rendering="auto"/><path d="M201.6 141.9 L214.6 141.9" stroke="#808080" stroke-width="1" fill="none"/><path d="M186.0 142.6 L186.0 151.4" stroke="#808080" stroke-width="1" fill="none"/><path d="M194.8 142.6 L194.8 151.4" stroke="#808080" stroke-width="1" fill="none"/><path d="M221.3 142.6 L221.3 151.4" stroke="#808080" stroke-width="1" fill="none"/><path d="M229.6 142.6 L229.6 151.4" stroke="#808080" stroke-width="1" fill="none"/><path d="M186.0 138.4 L186.0 142.6" stroke="#808080" stroke-width="1" fill="none"/><path d="M229.6 139.0 L229.6 142.6" stroke="#808080" stroke-width="1" fill="none"/><path d="M194.8 145.2 L221.3 145.2" stroke="#808080" stroke-width="1" fill="none"/><rect x="206" y="113" width="5" height="5" fill="url(#hx9)"/><rect x="182.4" y="143.6" width="3.6" height="1.6" fill="#808080" opacity=".8"/><rect x="229.6" y="144.2" width="4.2" height="1.2" fill="#808080" opacity=".8"/><rect x="170.5" y="137.4" width="4.1" height="1.6" fill="#808080" opacity=".8"/><rect x="242.1" y="137.4" width="4.1" height="1.6" fill="#808080" opacity=".8"/><path d="M187.1 123.4 L190.2 126.0 L191.2 130.7" stroke="#808080" stroke-width="1" fill="none" shape-rendering="auto"/></svg></div>
<div class="sb" style="left:325px;top:30px;width:17px;height:173px"></div>
<div class="sbb" style="left:325px;top:30px;width:17px;height:17px"><i></i><b class="u"></b></div>
<div class="sbb" style="left:325px;top:47px;width:17px;height:17px"><i></i></div>
<div class="sbb" style="left:325px;top:186px;width:17px;height:17px"><i></i><b class="d"></b></div>
<div class="sb" style="left:7px;top:203px;width:318px;height:16px"></div>
<div class="sbb" style="left:7px;top:203px;width:17px;height:16px"><i></i><b class="l"></b></div>
<div class="sbb" style="left:24px;top:203px;width:16px;height:16px"><i></i></div>
<div class="sbb" style="left:308px;top:203px;width:17px;height:16px"><i></i><b class="r"></b></div>
<div class="a" style="left:325px;top:203px;width:17px;height:16px;background:#f0f0f0"></div>
</div>
<div class="a win" style="left:3px;top:564px;width:351px;height:228px"><div class="hl"></div><div class="cap"></div>
<svg style="left:9px;top:10px" width="16" height="16" viewBox="0 0 16 16"><rect x="0" y="0" width="12" height="12" fill="#00008c"/><path d="M1 0h1v1h-1zM3 0h2v1h-2zM7 0h3v1h-3zM0 2h1v2h-1zM4 2h3v2h-3zM11 2h1v1h-1zM1 4h3v1h-3zM6 4h2v1h-2zM4 8h2v3h-2zM5 6h1v1h-1z" fill="#00e8f0"/><path d="M5 0h2v2h-2zM1 2h3v2h-3zM7 2h3v2h-3zM0 7h4v1h-4zM5 4h1v2h-1z" fill="#000"/><path d="M2 3h2v1h-2zM8 3h1v1h-1z" fill="#b89020"/><path d="M4 6h2v2h-2z" fill="#008878"/><g transform="translate(3.5 0) skewX(-10)"><text x="4.6" y="16.2" font-family="Liberation Sans,sans-serif" font-size="15.5" font-weight="bold" fill="#000" stroke="#000" stroke-width="1.1">S</text><text x="3.6" y="15.6" font-family="Liberation Sans,sans-serif" font-size="15.5" font-weight="bold" fill="#f00">S</text></g></svg>
<span class="ttl" id="w3" style="transform:scaleX(0.8738)">図面3【図面ファイル：新規作成.PSX】【...</span>
<div class="cb" style="left:240px"><u></u><svg width="29" height="15" viewBox="0 0 29 15" style="left:0;top:0"><rect x="9.5" y="6.5" width="10" height="4" rx="1" fill="#fff" stroke="#535666"/></svg></div>
<div class="cb" style="left:274px"><u></u><svg width="29" height="15" viewBox="0 0 29 15" style="left:0;top:0"><rect x="9.5" y="2.5" width="10" height="8" rx="1" fill="#fff" stroke="#535666"/><rect x="12.5" y="5.5" width="4" height="2" fill="#c8d4e4" stroke="#535666"/></svg></div>
<div class="cb" style="left:308px"><u></u><svg width="29" height="15" viewBox="0 0 29 15" style="left:0;top:0"><path d="M8.8 2.5h3.4l2.3 2.4 2.3-2.4h3.4l-3.9 4.2 3.9 4.2h-3.4l-2.3-2.4-2.3 2.4h-3.4l3.9-4.2z" fill="#fff" stroke="#535666" stroke-width="1" shape-rendering="auto"/></svg></div>
<div class="canvas" style="left:7px;top:30px;width:318px;height:173px"><svg width="318" height="173" viewBox="0 0 318 173" shape-rendering="crispEdges"><rect x="50.5" y="10.5" width="219" height="154" fill="none" stroke="#00ffff"/><rect x="58.5" y="14.5" width="207" height="147" fill="none" stroke="#ffff00"/><rect x="239.5" y="145.5" width="26" height="16" fill="none" stroke="#ffff00"/><rect x="239" y="145" width="6" height="17" fill="#ffff00"/><path d="M245 148.5h21M245 151.5h21M245 154.5h21M245 158.5h21M245 160.5h21" stroke="#ffff00"/><path d="M240 146h4v4h-4zM240 151h4v1h-4zM241 153h1v1h-1zM243 154h1v2h-1zM241 157h1v2h-1zM243 158h2v3h-2zM240 160h1v1h-1z" fill="#fff"/><path d="M253 154h5v2h-5zM261 154h2v1h-2z" fill="#fff"/><rect x="153" y="18" width="25" height="2" fill="url(#hxw)"/><rect x="164" y="18" width="3" height="2" fill="#000"/><rect x="164" y="19" width="3" height="1" fill="#fff"/><path d="M183 18h1v2h-1zM185 18h1v2h-1zM188 18h6v2h-6z" fill="#fff"/><rect x="67.3" y="36.6" width="12.0" height="2.8" fill="#808080"/><rect x="68.9" y="35.3" width="2.4" height="5.7" fill="#808080"/><path d="M79.5 31.1 L79.5 36.3" stroke="#808080" stroke-width="1" fill="none"/><path d="M82.7 31.1 L82.7 36.3" stroke="#808080" stroke-width="1" fill="none"/><rect x="78.2" y="29.6" width="5.7" height="2.0" fill="#808080"/><rect x="79.1" y="36.1" width="3.8" height="3.8" fill="#8b0000"/><rect x="80.3" y="37.3" width="1.4" height="1.4" fill="#400"/><path d="M80.3 39.9 L80.3 45.3 L86.9 45.3" stroke="#808080" stroke-width="1" fill="none"/><rect x="82.4" y="42.0" width="1.0" height="1.6" fill="#808080" opacity=".8"/><rect x="85" y="44" width="2" height="2" fill="url(#hxa)"/></svg></div>
<div class="sb" style="left:325px;top:30px;width:17px;height:173px"></div>
<div class="sbb" style="left:325px;top:30px;width:17px;height:17px"><i></i><b class="u"></b></div>
<div class="sbb" style="left:325px;top:47px;width:17px;height:17px"><i></i></div>
<div class="sbb" style="left:325px;top:186px;width:17px;height:17px"><i></i><b class="d"></b></div>
<div class="sb" style="left:7px;top:203px;width:318px;height:16px"></div>
<div class="sbb" style="left:7px;top:203px;width:17px;height:16px"><i></i><b class="l"></b></div>
<div class="sbb" style="left:24px;top:203px;width:16px;height:16px"><i></i></div>
<div class="sbb" style="left:308px;top:203px;width:17px;height:16px"><i></i><b class="r"></b></div>
<div class="a" style="left:325px;top:203px;width:17px;height:16px;background:#f0f0f0"></div>
</div>
<div class="a win" style="left:354px;top:108px;width:351px;height:228px"><div class="hl"></div><div class="cap"></div>
<svg style="left:9px;top:10px" width="16" height="16" viewBox="0 0 16 16"><rect x="0" y="0" width="12" height="12" fill="#00008c"/><path d="M1 0h1v1h-1zM3 0h2v1h-2zM7 0h3v1h-3zM0 2h1v2h-1zM4 2h3v2h-3zM11 2h1v1h-1zM1 4h3v1h-3zM6 4h2v1h-2zM4 8h2v3h-2zM5 6h1v1h-1z" fill="#00e8f0"/><path d="M5 0h2v2h-2zM1 2h3v2h-3zM7 2h3v2h-3zM0 7h4v1h-4zM5 4h1v2h-1z" fill="#000"/><path d="M2 3h2v1h-2zM8 3h1v1h-1z" fill="#b89020"/><path d="M4 6h2v2h-2z" fill="#008878"/><g transform="translate(3.5 0) skewX(-10)"><text x="4.6" y="16.2" font-family="Liberation Sans,sans-serif" font-size="15.5" font-weight="bold" fill="#000" stroke="#000" stroke-width="1.1">S</text><text x="3.6" y="15.6" font-family="Liberation Sans,sans-serif" font-size="15.5" font-weight="bold" fill="#f00">S</text></g></svg>
<span class="ttl" id="w4" style="transform:scaleX(0.8738)">図面4【図面ファイル：新規作成.PSX】【...</span>
<div class="cb" style="left:240px"><u></u><svg width="29" height="15" viewBox="0 0 29 15" style="left:0;top:0"><rect x="9.5" y="6.5" width="10" height="4" rx="1" fill="#fff" stroke="#535666"/></svg></div>
<div class="cb" style="left:274px"><u></u><svg width="29" height="15" viewBox="0 0 29 15" style="left:0;top:0"><rect x="9.5" y="2.5" width="10" height="8" rx="1" fill="#fff" stroke="#535666"/><rect x="12.5" y="5.5" width="4" height="2" fill="#c8d4e4" stroke="#535666"/></svg></div>
<div class="cb" style="left:308px"><u></u><svg width="29" height="15" viewBox="0 0 29 15" style="left:0;top:0"><path d="M8.8 2.5h3.4l2.3 2.4 2.3-2.4h3.4l-3.9 4.2 3.9 4.2h-3.4l-2.3-2.4-2.3 2.4h-3.4l3.9-4.2z" fill="#fff" stroke="#535666" stroke-width="1" shape-rendering="auto"/></svg></div>
<div class="canvas" style="left:7px;top:30px;width:318px;height:173px"><svg width="318" height="173" viewBox="0 0 318 173" shape-rendering="crispEdges"><rect x="50.5" y="10.5" width="219" height="154" fill="none" stroke="#00ffff"/><rect x="58.5" y="14.5" width="207" height="147" fill="none" stroke="#ffff00"/><rect x="239.5" y="145.5" width="26" height="16" fill="none" stroke="#ffff00"/><rect x="239" y="145" width="6" height="17" fill="#ffff00"/><path d="M245 148.5h21M245 151.5h21M245 154.5h21M245 158.5h21M245 160.5h21" stroke="#ffff00"/><path d="M240 146h4v4h-4zM240 151h4v1h-4zM241 153h1v1h-1zM243 154h1v2h-1zM241 157h1v2h-1zM243 158h2v3h-2zM240 160h1v1h-1z" fill="#fff"/><path d="M253 154h5v2h-5zM261 154h2v1h-2z" fill="#fff"/><rect x="153" y="18" width="25" height="2" fill="url(#hxw)"/><rect x="164" y="18" width="3" height="2" fill="#000"/><rect x="164" y="19" width="3" height="1" fill="#fff"/><path d="M183 18h1v2h-1zM185 18h1v2h-1zM188 18h4v2h-4z" fill="#fff"/><path d="M63.2 21.8 L129.6 21.8" stroke="#808080" stroke-width="1" fill="none"/><path d="M63.2 21.8 L63.2 26.7 L66.8 26.7 L66.8 23.5" stroke="#808080" stroke-width="1" fill="none"/><path d="M129.6 21.8 L129.6 26.7 L127.3 26.7" stroke="#808080" stroke-width="1" fill="none"/><path d="M94.3 21.8 L94.3 24.1" stroke="#808080" stroke-width="1" fill="none"/><rect x="78.8" y="20.2" width="2.2" height="1.3" fill="#808080"/><rect x="109.1" y="20.2" width="2.7" height="1.3" fill="#808080"/><path d="M66.8 23.5 L127.7 23.5" stroke="#8b0000" stroke-width="1.3" fill="none" shape-rendering="auto"/><rect x="127.3" y="23.5" width="1.8" height="2.7" fill="#8b0000"/><rect x="63" y="18" width="5" height="2" fill="url(#hxa)"/><path d="M73.0 29.4 L74.5 30.6 L73.0 31.8" stroke="#808080" stroke-width="1" fill="none" shape-rendering="auto"/><rect x="75.3" y="29.9" width="6.0" height="1.3" fill="#808080"/><path d="M66.8 34.2 L63.2 34.2 L63.2 39.4 L65.3 40.5 L83.4 47.4" stroke="#808080" stroke-width="1" fill="none" shape-rendering="auto"/><path d="M66.8 34.2 L66.8 38.9" stroke="#808080" stroke-width="1" fill="none"/><path d="M66.3 34.8 L66.3 39.4" stroke="#8b0000" stroke-width="1.3" fill="none" shape-rendering="auto"/><path d="M66.3 39.4 L83.4 45.1 L91.2 45.1" stroke="#8b0000" stroke-width="1.6" fill="none" shape-rendering="auto"/><path d="M83.9 45.7 L91.7 45.7 L91.7 48.8 L83.9 48.8Z" stroke="#808080" stroke-width="1" fill="none"/><rect x="73.0" y="43.3" width="2.6" height="1.6" fill="#808080"/><path d="M72.0 51.7 L73.5 52.9 L72.0 54.2" stroke="#808080" stroke-width="1" fill="none" shape-rendering="auto"/><rect x="74.3" y="52.2" width="5.5" height="1.3" fill="#808080"/><path d="M63.2 56.3 L126.0 56.3" stroke="#808080" stroke-width="1" fill="none"/><path d="M63.2 56.3 L63.2 58.8" stroke="#808080" stroke-width="1" fill="none"/><path d="M126.0 56.3 L126.0 58.8" stroke="#808080" stroke-width="1" fill="none"/><path d="M85.2 56.3 L91.7 56.3 L91.7 61.5 L85.2 61.5Z" stroke="#808080" stroke-width="1" fill="none"/><rect x="77.2" y="55.0" width="2.1" height="1.1" fill="#808080"/><rect x="104.2" y="55.0" width="2.1" height="1.1" fill="#808080"/><path d="M64.2 58.6 L124.9 58.6" stroke="#8b0000" stroke-width="1.3" fill="none" shape-rendering="auto"/><rect x="86.0" y="57.8" width="5.0" height="1.9" fill="#8b0000"/><path d="M72.2 62.4 L73.7 63.6 L72.2 64.9" stroke="#808080" stroke-width="1" fill="none" shape-rendering="auto"/><rect x="74.5" y="62.9" width="6.0" height="1.3" fill="#808080"/><path d="M100.0 62.4 L101.5 63.6 L100.0 64.9" stroke="#808080" stroke-width="1" fill="none" shape-rendering="auto"/><rect x="102.3" y="62.9" width="5.8" height="1.3" fill="#808080"/><path d="M66.3 68.5 L66.3 65.4 L69.9 65.4 L69.9 68.5" stroke="#808080" stroke-width="1" fill="none" shape-rendering="auto"/><path d="M64.2 69.5 L64.2 78.9" stroke="#808080" stroke-width="1" fill="none"/><rect x="63.2" y="72.9" width="1.0" height="2.1" fill="#808080"/><path d="M66.5 69.5 L66.5 78.3" stroke="#8b0000" stroke-width="1.3" fill="none" shape-rendering="auto"/><path d="M66.5 69.5 L69.2 69.5" stroke="#8b0000" stroke-width="1.3" fill="none" shape-rendering="auto"/><path d="M66.5 78.3 L69.8 78.3" stroke="#8b0000" stroke-width="1.3" fill="none" shape-rendering="auto"/><rect x="66.3" y="79.4" width="3.6" height="2.3" fill="#808080"/><path d="M61.1 85.4 L62.6 86.6 L61.1 87.9" stroke="#808080" stroke-width="1" fill="none" shape-rendering="auto"/><rect x="63.4" y="85.9" width="6.5" height="1.4" fill="#808080"/><path d="M132.2 21.8 L187.7 21.8" stroke="#808080" stroke-width="1" fill="none"/><path d="M132.2 21.8 L132.2 24.1" stroke="#808080" stroke-width="1" fill="none"/><path d="M187.7 21.8 L187.7 24.4" stroke="#808080" stroke-width="1" fill="none"/><path d="M133.2 24.1 L187.2 24.1" stroke="#8b0000" stroke-width="1.3" fill="none" shape-rendering="auto"/><path d="M153.0 22.8 L160.7 22.8 L160.7 26.5 L153.0 26.5Z" stroke="#808080" stroke-width="1" fill="none"/><rect x="153.5" y="23.1" width="6.7" height="1.8" fill="#8b0000"/><rect x="145.0" y="20.2" width="2.0" height="1.3" fill="#808080"/><rect x="172.2" y="20.4" width="2.9" height="1.3" fill="#808080"/><path d="M141.0 27.5 L142.5 28.7 L141.0 30.0" stroke="#808080" stroke-width="1" fill="none" shape-rendering="auto"/><rect x="143.3" y="28.0" width="5.8" height="1.4" fill="#808080"/><path d="M160.2 27.5 L161.7 28.7 L160.2 30.0" stroke="#808080" stroke-width="1" fill="none" shape-rendering="auto"/><rect x="162.5" y="28.0" width="9.1" height="1.4" fill="#808080"/><path d="M134.3 31.6 L144.7 31.6" stroke="#808080" stroke-width="1" fill="none"/><rect x="138.4" y="30.1" width="2.6" height="1.3" fill="#808080"/><path d="M134.3 31.6 L134.3 34.8 L131.7 35.3 L131.7 42.0 L134.3 42.5 L134.3 44.8 L135.6 44.8 L135.6 42.5" stroke="#808080" stroke-width="1" fill="none" shape-rendering="auto"/><path d="M144.7 31.6 L144.7 34.8 L147.5 35.3 L147.5 42.0 L144.7 42.5 L144.7 44.8 L143.3 44.8 L143.3 42.5" stroke="#808080" stroke-width="1" fill="none" shape-rendering="auto"/><rect x="131.2" y="36.8" width="1.0" height="3.7" fill="#808080"/><rect x="147.0" y="36.8" width="1.3" height="3.7" fill="#808080"/><path d="M134.5 42.0 L134.5 34.5 L144.4 34.5 L144.4 42.0" stroke="#8b0000" stroke-width="1.3" fill="none" shape-rendering="auto"/><path d="M134.3 48.6 L135.7 49.8 L134.3 51.0" stroke="#808080" stroke-width="1" fill="none" shape-rendering="auto"/><rect x="136.6" y="49.1" width="8.3" height="1.3" fill="#808080"/><path d="M131.7 56.0 L134.3 54.0 L136.9 55.0 L140.0 52.9 L142.6 55.0 L145.2 53.4 L147.8 56.0 L145.2 58.6 L134.3 58.6Z" stroke="#808080" stroke-width="1" fill="none" shape-rendering="auto"/><rect x="134.3" y="52.4" width="1.5" height="1.6" fill="#808080"/><rect x="138.9" y="51.9" width="2.1" height="1.5" fill="#808080"/><rect x="143.6" y="52.2" width="1.4" height="1.4" fill="#808080"/><path d="M134.3 56.3 L146.2 56.3" stroke="#8b0000" stroke-width="1.3" fill="none" shape-rendering="auto"/><rect x="145.0" y="55.0" width="1.2" height="2.1" fill="#8b0000"/><path d="M134.3 62.4 L135.7 63.6 L134.3 64.9" stroke="#808080" stroke-width="1" fill="none" shape-rendering="auto"/><rect x="136.6" y="62.9" width="6.0" height="1.3" fill="#808080"/><path d="M134.3 66.9 L144.7 66.9" stroke="#808080" stroke-width="1" fill="none"/><rect x="138.4" y="65.1" width="2.6" height="1.6" fill="#808080"/><path d="M134.3 66.9 L134.3 69.5 L132.2 70.0 L132.2 80.4 L134.3 80.9 L134.3 83.7 L135.6 83.7 L135.6 81.2" stroke="#808080" stroke-width="1" fill="none" shape-rendering="auto"/><path d="M144.7 66.9 L144.7 69.5 L147.5 70.0 L147.5 80.4 L144.7 80.9 L144.7 83.7 L143.3 83.7 L143.3 81.2" stroke="#808080" stroke-width="1" fill="none" shape-rendering="auto"/><rect x="131.2" y="73.7" width="1.0" height="2.6" fill="#808080"/><rect x="146.7" y="73.7" width="1.1" height="2.6" fill="#808080"/><path d="M134.5 80.4 L134.5 69.3 L144.4 69.3 L144.4 80.4" stroke="#8b0000" stroke-width="1.3" fill="none" shape-rendering="auto"/><path d="M134.3 86.6 L135.7 87.9 L134.3 89.1" stroke="#808080" stroke-width="1" fill="none" shape-rendering="auto"/><rect x="136.6" y="87.2" width="6.0" height="1.3" fill="#808080"/><path d="M182.4 21.8 L192.2 21.8 L194.5 23.1 L194.5 26.7 L192.2 26.7" stroke="#808080" stroke-width="1" fill="none" shape-rendering="auto"/><path d="M182.4 21.8 L179.8 23.9 L179.8 25.6 L182.4 26.7" stroke="#808080" stroke-width="1" fill="none" shape-rendering="auto"/><path d="M182.4 23.5 L192.2 23.5" stroke="#8b0000" stroke-width="1.3" fill="none" shape-rendering="auto"/><rect x="192.8" y="23.9" width="1.5" height="2.6" fill="#808080"/><rect x="185.5" y="20.2" width="2.6" height="1.3" fill="#808080"/><path d="M182.1 27.0 L183.4 28.0 L182.1 29.0" stroke="#808080" stroke-width="1" fill="none" shape-rendering="auto"/><path d="M185.2 28.5 L189.7 28.5" stroke="#808080" stroke-width="1" fill="none"/><path d="M181.3 33.7 L181.3 31.4 L182.4 30.6 L183.9 30.6 L185.0 31.4 L185.0 33.7" stroke="#808080" stroke-width="1" fill="none" shape-rendering="auto"/><rect x="182.1" y="32.9" width="2.1" height="0.8" fill="#8b0000"/><path d="M177.2 34.3 L178.7 35.6 L177.2 36.8" stroke="#808080" stroke-width="1" fill="none" shape-rendering="auto"/><rect x="179.5" y="34.9" width="5.2" height="1.3" fill="#808080"/><path d="M181.3 42.0 L181.3 39.7 L182.4 38.9 L183.9 38.9 L185.0 39.7 L185.0 42.0" stroke="#808080" stroke-width="1" fill="none" shape-rendering="auto"/><rect x="182.1" y="41.2" width="2.1" height="0.8" fill="#8b0000"/><path d="M177.2 42.6 L178.7 43.9 L177.2 45.1" stroke="#808080" stroke-width="1" fill="none" shape-rendering="auto"/><rect x="179.5" y="43.2" width="5.2" height="1.3" fill="#808080"/></svg></div>
<div class="sb" style="left:325px;top:30px;width:17px;height:173px"></div>
<div class="sbb" style="left:325px;top:30px;width:17px;height:17px"><i></i><b class="u"></b></div>
<div class="sbb" style="left:325px;top:47px;width:17px;height:17px"><i></i></div>
<div class="sbb" style="left:325px;top:186px;width:17px;height:17px"><i></i><b class="d"></b></div>
<div class="sb" style="left:7px;top:203px;width:318px;height:16px"></div>
<div class="sbb" style="left:7px;top:203px;width:17px;height:16px"><i></i><b class="l"></b></div>
<div class="sbb" style="left:24px;top:203px;width:16px;height:16px"><i></i></div>
<div class="sbb" style="left:308px;top:203px;width:17px;height:16px"><i></i><b class="r"></b></div>
<div class="a" style="left:325px;top:203px;width:17px;height:16px;background:#f0f0f0"></div>
</div>
<div class="a win" style="left:354px;top:336px;width:351px;height:228px"><div class="hl"></div><div class="cap"></div>
<svg style="left:9px;top:10px" width="16" height="16" viewBox="0 0 16 16"><rect x="0" y="0" width="12" height="12" fill="#00008c"/><path d="M1 0h1v1h-1zM3 0h2v1h-2zM7 0h3v1h-3zM0 2h1v2h-1zM4 2h3v2h-3zM11 2h1v1h-1zM1 4h3v1h-3zM6 4h2v1h-2zM4 8h2v3h-2zM5 6h1v1h-1z" fill="#00e8f0"/><path d="M5 0h2v2h-2zM1 2h3v2h-3zM7 2h3v2h-3zM0 7h4v1h-4zM5 4h1v2h-1z" fill="#000"/><path d="M2 3h2v1h-2zM8 3h1v1h-1z" fill="#b89020"/><path d="M4 6h2v2h-2z" fill="#008878"/><g transform="translate(3.5 0) skewX(-10)"><text x="4.6" y="16.2" font-family="Liberation Sans,sans-serif" font-size="15.5" font-weight="bold" fill="#000" stroke="#000" stroke-width="1.1">S</text><text x="3.6" y="15.6" font-family="Liberation Sans,sans-serif" font-size="15.5" font-weight="bold" fill="#f00">S</text></g></svg>
<span class="ttl" id="w5" style="transform:scaleX(0.8738)">図面5【図面ファイル：新規作成.PSX】【...</span>
<div class="cb" style="left:240px"><u></u><svg width="29" height="15" viewBox="0 0 29 15" style="left:0;top:0"><rect x="9.5" y="6.5" width="10" height="4" rx="1" fill="#fff" stroke="#535666"/></svg></div>
<div class="cb" style="left:274px"><u></u><svg width="29" height="15" viewBox="0 0 29 15" style="left:0;top:0"><rect x="9.5" y="2.5" width="10" height="8" rx="1" fill="#fff" stroke="#535666"/><rect x="12.5" y="5.5" width="4" height="2" fill="#c8d4e4" stroke="#535666"/></svg></div>
<div class="cb" style="left:308px"><u></u><svg width="29" height="15" viewBox="0 0 29 15" style="left:0;top:0"><path d="M8.8 2.5h3.4l2.3 2.4 2.3-2.4h3.4l-3.9 4.2 3.9 4.2h-3.4l-2.3-2.4-2.3 2.4h-3.4l3.9-4.2z" fill="#fff" stroke="#535666" stroke-width="1" shape-rendering="auto"/></svg></div>
<div class="canvas" style="left:7px;top:30px;width:318px;height:173px"><svg width="318" height="173" viewBox="0 0 318 173" shape-rendering="crispEdges"><rect x="50.5" y="10.5" width="219" height="154" fill="none" stroke="#00ffff"/><rect x="58.5" y="14.5" width="207" height="147" fill="none" stroke="#ffff00"/><rect x="239.5" y="145.5" width="26" height="16" fill="none" stroke="#ffff00"/><rect x="239" y="145" width="6" height="17" fill="#ffff00"/><path d="M245 148.5h21M245 151.5h21M245 154.5h21M245 158.5h21M245 160.5h21" stroke="#ffff00"/><path d="M240 146h4v4h-4zM240 151h4v1h-4zM241 153h1v1h-1zM243 154h1v2h-1zM241 157h1v2h-1zM243 158h2v3h-2zM240 160h1v1h-1z" fill="#fff"/><path d="M253 154h5v2h-5zM261 154h2v1h-2z" fill="#fff"/><rect x="153" y="18" width="25" height="2" fill="url(#hxw)"/><rect x="164" y="18" width="3" height="2" fill="#000"/><rect x="164" y="19" width="3" height="1" fill="#fff"/><path d="M183 18h1v2h-1zM185 18h1v2h-1zM188 18h6v2h-6z" fill="#fff"/><rect x="196" y="18" width="6" height="2" fill="#fff"/><path d="M71.3 38.9 L71.3 26.5 L134.0 26.5 L134.0 38.9" stroke="#808080" stroke-width="1" fill="none"/><path d="M71.3 38.9 L89.7 46.2" stroke="#808080" stroke-width="1" fill="none" shape-rendering="auto"/><path d="M134.0 38.9 L115.6 46.2" stroke="#808080" stroke-width="1" fill="none" shape-rendering="auto"/><path d="M62.2 33.2 L143.1 33.2 L143.1 86.6 L62.2 86.6Z" stroke="#808080" stroke-width="1" fill="none"/><path d="M64.7 33.2 L64.7 86.6" stroke="#808080" stroke-width="1" fill="none"/><path d="M67.9 33.2 L67.9 86.6" stroke="#808080" stroke-width="1" fill="none"/><path d="M137.9 33.2 L137.9 86.6" stroke="#808080" stroke-width="1" fill="none"/><path d="M140.5 33.2 L140.5 86.6" stroke="#808080" stroke-width="1" fill="none"/><path d="M64.7 46.2 L89.7 46.2" stroke="#808080" stroke-width="1" fill="none"/><path d="M115.6 46.2 L140.5 46.2" stroke="#808080" stroke-width="1" fill="none"/><path d="M67.9 75.2 L89.7 75.2" stroke="#808080" stroke-width="1" fill="none"/><path d="M115.6 75.2 L137.9 75.2" stroke="#808080" stroke-width="1" fill="none"/><path d="M67.9 80.4 L80.3 80.4" stroke="#808080" stroke-width="1" fill="none"/><path d="M67.9 83.0 L80.3 83.0" stroke="#808080" stroke-width="1" fill="none"/><path d="M124.9 80.4 L137.9 80.4" stroke="#808080" stroke-width="1" fill="none"/><path d="M124.9 83.0 L137.9 83.0" stroke="#808080" stroke-width="1" fill="none"/><path d="M64.7 38.9 L71.3 38.9" stroke="#808080" stroke-width="1" fill="none"/><path d="M134.0 38.9 L140.5 38.9" stroke="#808080" stroke-width="1" fill="none"/><path d="M89.7 46.2 L89.7 75.2" stroke="#808080" stroke-width="1" fill="none"/><path d="M115.6 46.2 L115.6 75.2" stroke="#808080" stroke-width="1" fill="none"/><rect x="61.1" y="59.1" width="3.6" height="3.7" fill="#808080"/><rect x="136.4" y="58.1" width="4.1" height="5.7" fill="#808080"/><rect x="65.3" y="36.3" width="2.6" height="4.2" fill="#808080"/><rect x="134.8" y="34.8" width="2.6" height="4.1" fill="#808080"/><rect x="64.7" y="81.5" width="3.2" height="4.1" fill="#808080"/><rect x="136.9" y="81.5" width="3.1" height="4.1" fill="#808080"/><rect x="90.2" y="36.0" width="5.7" height="49.8" fill="#7b0000"/><rect x="97.1" y="36.0" width="5.0" height="49.8" fill="#7b0000"/><path d="M114.0 35.3 L114.0 85.8" stroke="#8b0000" stroke-width="1.8" fill="none" shape-rendering="auto"/><path d="M102.4 30.1 L102.4 103.5" stroke="#808080" stroke-width="1" fill="none"/><path d="M80.3 75.2 L80.3 103.5" stroke="#808080" stroke-width="1" fill="none"/><path d="M124.9 75.2 L124.9 103.5" stroke="#808080" stroke-width="1" fill="none"/><path d="M80.3 103.5 L124.9 103.5" stroke="#808080" stroke-width="1" fill="none"/><path d="M89.1 86.6 L89.1 100.7" stroke="#808080" stroke-width="1" fill="none"/><path d="M115.6 86.6 L115.6 100.7" stroke="#808080" stroke-width="1" fill="none"/><path d="M89.1 99.6 L115.6 99.6" stroke="#808080" stroke-width="1" fill="none"/><path d="M89.1 101.2 L115.6 101.2" stroke="#808080" stroke-width="1" fill="none"/><path d="M83.4 86.6 L83.4 94.4 L88.1 94.4 L88.1 86.6" stroke="#808080" stroke-width="1" fill="none"/><path d="M84.3 86.6 L84.3 93.6" stroke="#808080" stroke-width="1" fill="none"/><path d="M87.3 86.6 L87.3 93.6" stroke="#808080" stroke-width="1" fill="none"/><path d="M99.5 86.6 L99.5 94.4 L105.2 94.4 L105.2 86.6" stroke="#808080" stroke-width="1" fill="none"/><path d="M100.3 86.6 L100.3 93.6" stroke="#808080" stroke-width="1" fill="none"/><path d="M104.4 86.6 L104.4 93.6" stroke="#808080" stroke-width="1" fill="none"/><path d="M116.1 86.6 L116.1 94.4 L120.8 94.4 L120.8 86.6" stroke="#808080" stroke-width="1" fill="none"/><path d="M116.9 86.6 L116.9 93.6" stroke="#808080" stroke-width="1" fill="none"/><path d="M120.0 86.6 L120.0 93.6" stroke="#808080" stroke-width="1" fill="none"/><rect x="94.8" y="96.5" width="1.8" height="2.1" fill="#808080"/><rect x="108.0" y="96.5" width="1.7" height="2.1" fill="#808080"/><rect x="101.4" y="99.6" width="2.1" height="3.6" fill="#808080"/><rect x="95" y="21" width="12" height="4" fill="url(#hxa)"/><path d="M81.3 57.1 L82.9 59.7 L89.1 60.2" stroke="#808080" stroke-width="1" fill="none" shape-rendering="auto"/><path d="M114.6 59.7 L120.3 59.7 L119.2 57.1" stroke="#808080" stroke-width="1" fill="none" shape-rendering="auto"/><rect x="83.9" y="58.8" width="2.1" height="1.1" fill="#808080"/><rect x="120.8" y="58.4" width="3.1" height="1.5" fill="#808080"/><path d="M149.3 33.2 L211.8 33.2 L211.8 86.6 L149.3 86.6Z" stroke="#808080" stroke-width="1" fill="none"/><path d="M151.9 33.2 L151.9 86.6" stroke="#808080" stroke-width="1" fill="none"/><path d="M154.5 33.2 L154.5 86.6" stroke="#808080" stroke-width="1" fill="none"/><path d="M206.3 33.2 L206.3 86.6" stroke="#808080" stroke-width="1" fill="none"/><path d="M208.9 33.2 L208.9 86.6" stroke="#808080" stroke-width="1" fill="none"/><path d="M174.1 75.2 L174.1 26.5 L186.9 26.5 L186.9 75.2" stroke="#808080" stroke-width="1" fill="none"/><path d="M154.5 36.3 L174.1 36.3" stroke="#808080" stroke-width="1" fill="none"/><path d="M186.9 36.3 L206.3 36.3" stroke="#808080" stroke-width="1" fill="none"/><path d="M154.5 38.9 L174.1 38.9" stroke="#808080" stroke-width="1" fill="none"/><path d="M186.9 38.9 L206.3 38.9" stroke="#808080" stroke-width="1" fill="none"/><path d="M154.5 42.0 L174.1 42.0" stroke="#808080" stroke-width="1" fill="none"/><path d="M186.9 42.0 L206.3 42.0" stroke="#808080" stroke-width="1" fill="none"/><path d="M154.5 46.2 L174.1 46.2" stroke="#808080" stroke-width="1" fill="none"/><path d="M186.9 46.2 L208.9 46.2" stroke="#808080" stroke-width="1" fill="none"/><path d="M158.5 75.2 L174.1 75.2" stroke="#808080" stroke-width="1" fill="none"/><path d="M186.9 75.2 L208.9 75.2" stroke="#808080" stroke-width="1" fill="none"/><rect x="175.1" y="36.0" width="3.7" height="49.8" fill="#7b0000"/><rect x="183.9" y="35.3" width="1.9" height="50.5" fill="#7b0000"/><path d="M180.3 30.1 L180.3 106.3" stroke="#808080" stroke-width="1" fill="none"/><path d="M158.5 75.2 L158.5 106.3" stroke="#808080" stroke-width="1" fill="none"/><path d="M202.8 75.2 L202.8 106.3" stroke="#808080" stroke-width="1" fill="none"/><path d="M158.5 106.3 L202.8 106.3" stroke="#808080" stroke-width="1" fill="none"/><path d="M202.8 80.9 L208.9 80.9" stroke="#808080" stroke-width="1" fill="none"/><rect x="205.2" y="34.2" width="2.1" height="6.8" fill="#808080"/><rect x="205.2" y="58.1" width="2.6" height="5.7" fill="#808080"/><rect x="148.1" y="58.6" width="3.7" height="4.2" fill="#808080"/><rect x="203.7" y="80.9" width="3.1" height="4.7" fill="#808080"/><path d="M174.6 86.6 L174.6 104.3" stroke="#808080" stroke-width="1" fill="none"/><path d="M186.5 86.6 L186.5 104.3" stroke="#808080" stroke-width="1" fill="none"/><path d="M174.6 103.2 L186.5 103.2" stroke="#808080" stroke-width="1" fill="none"/><path d="M174.6 104.3 L186.5 104.3" stroke="#808080" stroke-width="1" fill="none"/><path d="M161.1 85.6 L161.1 94.4 L168.4 94.4 L168.4 85.6" stroke="#808080" stroke-width="1" fill="none"/><path d="M161.9 85.6 L161.9 93.6" stroke="#808080" stroke-width="1" fill="none"/><path d="M167.5 85.6 L167.5 93.6" stroke="#808080" stroke-width="1" fill="none"/><path d="M177.2 85.6 L177.2 94.4 L183.4 94.4 L183.4 85.6" stroke="#808080" stroke-width="1" fill="none"/><path d="M178.0 85.6 L178.0 93.6" stroke="#808080" stroke-width="1" fill="none"/><path d="M182.6 85.6 L182.6 93.6" stroke="#808080" stroke-width="1" fill="none"/><path d="M193.3 85.6 L193.3 94.4 L199.5 94.4 L199.5 85.6" stroke="#808080" stroke-width="1" fill="none"/><path d="M194.1 85.6 L194.1 93.6" stroke="#808080" stroke-width="1" fill="none"/><path d="M198.7 85.6 L198.7 93.6" stroke="#808080" stroke-width="1" fill="none"/><rect x="174" y="21" width="12" height="4" fill="url(#hxa)"/><path d="M166.3 54.0 L168.4 56.5 L174.1 57.1" stroke="#808080" stroke-width="1" fill="none" shape-rendering="auto"/><path d="M166.3 60.2 L174.1 60.2" stroke="#808080" stroke-width="1" fill="none"/><path d="M185.5 59.7 L191.2 59.7 L190.2 57.1" stroke="#808080" stroke-width="1" fill="none" shape-rendering="auto"/><rect x="191.2" y="58.4" width="2.6" height="1.5" fill="#808080"/><rect x="167.3" y="58.1" width="3.7" height="1.6" fill="#808080"/><rect x="173.6" y="98.6" width="4.1" height="2.6" fill="#808080"/><rect x="179.3" y="102.2" width="2.0" height="3.6" fill="#808080"/><path d="M74.6 131.7 L102.6 131.7 L102.6 156.6 L74.6 156.6Z" stroke="#808080" stroke-width="1.6" fill="none" shape-rendering="auto"/><path d="M76.7 133.8 L100.5 133.8 L100.5 137.4 L76.7 137.4Z" stroke="#808080" stroke-width="1" fill="none"/><rect x="76.7" y="137.4" width="25.9" height="4.5" fill="#808080"/><rect x="74.6" y="152.0" width="28.0" height="3.6" fill="#808080"/><path d="M64.2 140.6 L106.3 140.6 L106.3 152.0 L64.2 152.0Z" stroke="#808080" stroke-width="1" fill="none"/><path d="M66.3 140.6 L66.3 152.0" stroke="#808080" stroke-width="1" fill="none"/><path d="M73.6 133.8 L73.6 155.6" stroke="#808080" stroke-width="1.6" fill="none" shape-rendering="auto"/><path d="M104.2 140.6 L104.2 152.0" stroke="#808080" stroke-width="1" fill="none"/><rect x="74.6" y="140.6" width="2.6" height="11.9" fill="#808080"/><rect x="100.0" y="150.4" width="2.6" height="6.2" fill="#808080"/><rect x="63.2" y="144.7" width="2.1" height="3.1" fill="#808080"/><rect x="105.2" y="145.2" width="1.6" height="4.2" fill="#808080"/><rect x="77.2" y="142.1" width="22.8" height="7.8" fill="#000"/><rect x="99.8" y="142.1" width="2.3" height="8.0" fill="#8b0000"/><path d="M77.2 150.1 L102.1 150.1" stroke="#8b0000" stroke-width="1.6" fill="none" shape-rendering="auto"/><rect x="84" y="126" width="6" height="4" fill="url(#hxa)"/><path d="M69.4 133.3 L71.5 135.4 L74.6 135.4" stroke="#808080" stroke-width="1" fill="none" shape-rendering="auto"/><path d="M102.6 137.4 L107.8 137.4 L106.8 134.9" stroke="#808080" stroke-width="1" fill="none" shape-rendering="auto"/><rect x="108.3" y="136.4" width="3.7" height="1.4" fill="#808080"/><rect x="104.2" y="155.1" width="4.7" height="1.3" fill="#808080"/><path d="M68.9 143.2 L71.0 145.7 L73.6 146.3" stroke="#808080" stroke-width="1" fill="none" shape-rendering="auto"/><path d="M130.3 141.3 L154.8 141.3 L154.8 151.7 L130.3 151.7Z" stroke="#8b0000" stroke-width="1.6" fill="none" shape-rendering="auto"/><path d="M146.2 141.3 L146.2 143.2" stroke="#8b0000" stroke-width="1" fill="none"/><path d="M152.4 141.3 L152.4 143.2" stroke="#8b0000" stroke-width="1" fill="none"/><path d="M132.2 149.4 L132.2 151.7" stroke="#8b0000" stroke-width="1" fill="none"/><path d="M138.4 149.4 L138.4 151.7" stroke="#8b0000" stroke-width="1" fill="none"/><rect x="135" y="137" width="6" height="3" fill="url(#hxa)"/><path d="M120.3 143.4 L122.9 146.1 L130.3 146.3" stroke="#808080" stroke-width="1" fill="none" shape-rendering="auto"/><rect x="121.8" y="145.2" width="3.1" height="1.3" fill="#808080"/><path d="M175.1 126.0 L181.9 126.0 L181.9 147.5 L189.7 147.5 L189.7 153.7 L167.3 153.7 L167.3 147.5 L175.1 147.5Z" stroke="#808080" stroke-width="1" fill="none"/><path d="M178.4 121.9 L178.4 157.9" stroke="#808080" stroke-width="1" fill="none"/><path d="M175.1 153.7 L175.1 155.6" stroke="#808080" stroke-width="1" fill="none"/><rect x="175.1" y="117.0" width="4.7" height="1.5" fill="#aaa"/><path d="M201.1 126.0 L232.9 126.0 L232.9 130.2 L225.5 132.8 L223.6 134.0 L223.6 147.3 L229.1 147.3 L229.1 153.7 L206.3 153.7 L206.3 147.3 L210.9 147.3 L210.9 134.0 L209.4 132.8 L201.1 130.2Z" stroke="#808080" stroke-width="1" fill="none" shape-rendering="auto"/><path d="M217.4 121.9 L217.4 156.6" stroke="#808080" stroke-width="1" fill="none" stroke-dasharray="3 1.5"/><path d="M215.1 122.2 L217.7 124.5" stroke="#808080" stroke-width="1" fill="none" shape-rendering="auto"/><path d="M215.1 157.7 L217.7 155.6" stroke="#808080" stroke-width="1" fill="none" shape-rendering="auto"/><path d="M221.3 155.6 L222.9 154.4" stroke="#808080" stroke-width="1" fill="none" shape-rendering="auto"/><rect x="220.8" y="125.0" width="2.1" height="1.0" fill="#808080"/><rect x="207.8" y="139.5" width="1.6" height="2.1" fill="#808080"/><rect x="223.6" y="139.5" width="1.3" height="1.6" fill="#808080"/></svg></div>
<div class="sb" style="left:325px;top:30px;width:17px;height:173px"></div>
<div class="sbb" style="left:325px;top:30px;width:17px;height:17px"><i></i><b class="u"></b></div>
<div class="sbb" style="left:325px;top:47px;width:17px;height:17px"><i></i></div>
<div class="sbb" style="left:325px;top:186px;width:17px;height:17px"><i></i><b class="d"></b></div>
<div class="sb" style="left:7px;top:203px;width:318px;height:16px"></div>
<div class="sbb" style="left:7px;top:203px;width:17px;height:16px"><i></i><b class="l"></b></div>
<div class="sbb" style="left:24px;top:203px;width:16px;height:16px"><i></i></div>
<div class="sbb" style="left:308px;top:203px;width:17px;height:16px"><i></i><b class="r"></b></div>
<div class="a" style="left:325px;top:203px;width:17px;height:16px;background:#f0f0f0"></div>
</div>
<div class="a win" style="left:354px;top:564px;width:351px;height:228px"><div class="hl"></div><div class="cap"></div>
<svg style="left:9px;top:10px" width="16" height="16" viewBox="0 0 16 16"><rect x="0" y="0" width="12" height="12" fill="#00008c"/><path d="M1 0h1v1h-1zM3 0h2v1h-2zM7 0h3v1h-3zM0 2h1v2h-1zM4 2h3v2h-3zM11 2h1v1h-1zM1 4h3v1h-3zM6 4h2v1h-2zM4 8h2v3h-2zM5 6h1v1h-1z" fill="#00e8f0"/><path d="M5 0h2v2h-2zM1 2h3v2h-3zM7 2h3v2h-3zM0 7h4v1h-4zM5 4h1v2h-1z" fill="#000"/><path d="M2 3h2v1h-2zM8 3h1v1h-1z" fill="#b89020"/><path d="M4 6h2v2h-2z" fill="#008878"/><g transform="translate(3.5 0) skewX(-10)"><text x="4.6" y="16.2" font-family="Liberation Sans,sans-serif" font-size="15.5" font-weight="bold" fill="#000" stroke="#000" stroke-width="1.1">S</text><text x="3.6" y="15.6" font-family="Liberation Sans,sans-serif" font-size="15.5" font-weight="bold" fill="#f00">S</text></g></svg>
<span class="ttl" id="w6" style="transform:scaleX(0.8738)">図面6【図面ファイル：新規作成.PSX】【...</span>
<div class="cb" style="left:240px"><u></u><svg width="29" height="15" viewBox="0 0 29 15" style="left:0;top:0"><rect x="9.5" y="6.5" width="10" height="4" rx="1" fill="#fff" stroke="#535666"/></svg></div>
<div class="cb" style="left:274px"><u></u><svg width="29" height="15" viewBox="0 0 29 15" style="left:0;top:0"><rect x="9.5" y="2.5" width="10" height="8" rx="1" fill="#fff" stroke="#535666"/><rect x="12.5" y="5.5" width="4" height="2" fill="#c8d4e4" stroke="#535666"/></svg></div>
<div class="cb" style="left:308px"><u></u><svg width="29" height="15" viewBox="0 0 29 15" style="left:0;top:0"><path d="M8.8 2.5h3.4l2.3 2.4 2.3-2.4h3.4l-3.9 4.2 3.9 4.2h-3.4l-2.3-2.4-2.3 2.4h-3.4l3.9-4.2z" fill="#fff" stroke="#535666" stroke-width="1" shape-rendering="auto"/></svg></div>
<div class="canvas" style="left:7px;top:30px;width:318px;height:173px"><svg width="318" height="173" viewBox="0 0 318 173" shape-rendering="crispEdges"><rect x="50.5" y="10.5" width="219" height="154" fill="none" stroke="#00ffff"/><rect x="58.5" y="14.5" width="207" height="147" fill="none" stroke="#ffff00"/><rect x="239.5" y="145.5" width="26" height="16" fill="none" stroke="#ffff00"/><rect x="239" y="145" width="6" height="17" fill="#ffff00"/><path d="M245 148.5h21M245 151.5h21M245 154.5h21M245 158.5h21M245 160.5h21" stroke="#ffff00"/><path d="M240 146h4v4h-4zM240 151h4v1h-4zM241 153h1v1h-1zM243 154h1v2h-1zM241 157h1v2h-1zM243 158h2v3h-2zM240 160h1v1h-1z" fill="#fff"/><path d="M253 154h5v2h-5zM261 154h2v1h-2z" fill="#fff"/><rect x="153" y="18" width="25" height="2" fill="url(#hxw)"/><rect x="164" y="18" width="3" height="2" fill="#000"/><rect x="164" y="19" width="3" height="1" fill="#fff"/><path d="M183 18h1v2h-1zM185 18h1v2h-1zM188 18h6v2h-6z" fill="#fff"/><path d="M63.2 34.8 L63.2 23.3 L66.8 23.3 L66.8 21.5 L88.9 21.5 L88.9 23.3" stroke="#808080" stroke-width="1" fill="none"/><path d="M63.2 34.8 L66.3 34.8 L66.3 36.3 L74.6 36.3 L74.6 34.8" stroke="#808080" stroke-width="1" fill="none"/><rect x="88.9" y="23.3" width="2.9" height="3.8" fill="#808080"/><rect x="74.6" y="31.1" width="2.4" height="3.7" fill="#808080"/><rect x="75.8" y="20.0" width="1.9" height="1.3" fill="#808080"/><rect x="62.2" y="28.0" width="1.0" height="2.1" fill="#808080"/><path d="M88.6 25.4 L88.6 23.5 L66.5 23.5 L66.5 34.2 L74.6 34.2 L74.6 32.5" stroke="#8b0000" stroke-width="1.3" fill="none" shape-rendering="auto"/><rect x="63" y="18" width="5" height="2" fill="url(#hxa)"/><path d="M72.0 40.6 L73.5 41.8 L72.0 43.1" stroke="#808080" stroke-width="1" fill="none" shape-rendering="auto"/><rect x="74.3" y="41.1" width="6.5" height="1.3" fill="#808080"/><path d="M66.1 105.3 L63.4 105.3 L63.4 155.6 L66.3 155.6" stroke="#808080" stroke-width="1" fill="none"/><path d="M66.5 106.0 L66.5 155.6" stroke="#8b0000" stroke-width="1.3" fill="none" shape-rendering="auto"/><rect x="66.3" y="155.1" width="3.6" height="2.8" fill="#808080"/><rect x="67.1" y="155.8" width="1.8" height="1.3" fill="#000"/><rect x="62.2" y="129.1" width="1.2" height="2.6" fill="#808080"/><rect x="71.0" y="128.1" width="2.0" height="5.7" fill="#808080"/><path d="M69.2 136.9 L71.2 135.1 L73.0 136.9" stroke="#808080" stroke-width="1" fill="none" shape-rendering="auto"/></svg></div>
<div class="sb" style="left:325px;top:30px;width:17px;height:173px"></div>
<div class="sbb" style="left:325px;top:30px;width:17px;height:17px"><i></i><b class="u"></b></div>
<div class="sbb" style="left:325px;top:47px;width:17px;height:17px"><i></i></div>
<div class="sbb" style="left:325px;top:186px;width:17px;height:17px"><i></i><b class="d"></b></div>
<div class="sb" style="left:7px;top:203px;width:318px;height:16px"></div>
<div class="sbb" style="left:7px;top:203px;width:17px;height:16px"><i></i><b class="l"></b></div>
<div class="sbb" style="left:24px;top:203px;width:16px;height:16px"><i></i></div>
<div class="sbb" style="left:308px;top:203px;width:17px;height:16px"><i></i><b class="r"></b></div>
<div class="a" style="left:325px;top:203px;width:17px;height:16px;background:#f0f0f0"></div>
</div>
<div class="a win" style="left:705px;top:108px;width:351px;height:228px"><div class="hl"></div><div class="cap"></div>
<svg style="left:9px;top:10px" width="16" height="16" viewBox="0 0 16 16"><rect x="0" y="0" width="12" height="12" fill="#00008c"/><path d="M1 0h1v1h-1zM3 0h2v1h-2zM7 0h3v1h-3zM0 2h1v2h-1zM4 2h3v2h-3zM11 2h1v1h-1zM1 4h3v1h-3zM6 4h2v1h-2zM4 8h2v3h-2zM5 6h1v1h-1z" fill="#00e8f0"/><path d="M5 0h2v2h-2zM1 2h3v2h-3zM7 2h3v2h-3zM0 7h4v1h-4zM5 4h1v2h-1z" fill="#000"/><path d="M2 3h2v1h-2zM8 3h1v1h-1z" fill="#b89020"/><path d="M4 6h2v2h-2z" fill="#008878"/><g transform="translate(3.5 0) skewX(-10)"><text x="4.6" y="16.2" font-family="Liberation Sans,sans-serif" font-size="15.5" font-weight="bold" fill="#000" stroke="#000" stroke-width="1.1">S</text><text x="3.6" y="15.6" font-family="Liberation Sans,sans-serif" font-size="15.5" font-weight="bold" fill="#f00">S</text></g></svg>
<span class="ttl" id="w7" style="transform:scaleX(0.8738)">図面7【図面ファイル：新規作成.PSX】【...</span>
<div class="cb" style="left:240px"><u></u><svg width="29" height="15" viewBox="0 0 29 15" style="left:0;top:0"><rect x="9.5" y="6.5" width="10" height="4" rx="1" fill="#fff" stroke="#535666"/></svg></div>
<div class="cb" style="left:274px"><u></u><svg width="29" height="15" viewBox="0 0 29 15" style="left:0;top:0"><rect x="9.5" y="2.5" width="10" height="8" rx="1" fill="#fff" stroke="#535666"/><rect x="12.5" y="5.5" width="4" height="2" fill="#c8d4e4" stroke="#535666"/></svg></div>
<div class="cb" style="left:308px"><u></u><svg width="29" height="15" viewBox="0 0 29 15" style="left:0;top:0"><path d="M8.8 2.5h3.4l2.3 2.4 2.3-2.4h3.4l-3.9 4.2 3.9 4.2h-3.4l-2.3-2.4-2.3 2.4h-3.4l3.9-4.2z" fill="#fff" stroke="#535666" stroke-width="1" shape-rendering="auto"/></svg></div>
<div class="canvas" style="left:7px;top:30px;width:318px;height:173px"><svg width="318" height="173" viewBox="0 0 318 173" shape-rendering="crispEdges"><rect x="50.5" y="10.5" width="219" height="154" fill="none" stroke="#00ffff"/><rect x="58.5" y="14.5" width="207" height="147" fill="none" stroke="#ffff00"/><rect x="239.5" y="145.5" width="26" height="16" fill="none" stroke="#ffff00"/><rect x="239" y="145" width="6" height="17" fill="#ffff00"/><path d="M245 148.5h21M245 151.5h21M245 154.5h21M245 158.5h21M245 160.5h21" stroke="#ffff00"/><path d="M240 146h4v4h-4zM240 151h4v1h-4zM241 153h1v1h-1zM243 154h1v2h-1zM241 157h1v2h-1zM243 158h2v3h-2zM240 160h1v1h-1z" fill="#fff"/><path d="M253 154h5v2h-5zM261 154h2v1h-2z" fill="#fff"/><rect x="153" y="18" width="25" height="2" fill="url(#hxw)"/><rect x="164" y="18" width="3" height="2" fill="#000"/><rect x="164" y="19" width="3" height="1" fill="#fff"/><path d="M183 18h1v2h-1zM185 18h1v2h-1zM188 18h6v2h-6z" fill="#fff"/><rect x="196" y="18" width="11" height="2" fill="#fff"/><path d="M72.5 30.6 L62.7 30.6 L62.7 47.7 L72.0 47.7" stroke="#808080" stroke-width="1" fill="none"/><path d="M64.7 30.6 L64.7 47.7" stroke="#808080" stroke-width="1" fill="none"/><path d="M72.5 30.6 L72.5 47.7" stroke="#808080" stroke-width="1" fill="none"/><path d="M87.6 30.1 L87.6 47.2" stroke="#808080" stroke-width="1" fill="none"/><path d="M72.5 32.7 L87.6 32.7" stroke="#808080" stroke-width="1" fill="none"/><path d="M72.5 39.4 L87.6 39.4" stroke="#808080" stroke-width="1" fill="none"/><path d="M72.5 46.2 L87.6 46.2" stroke="#808080" stroke-width="1" fill="none"/><rect x="62.7" y="29.6" width="3.1" height="3.6" fill="#808080"/><rect x="61.6" y="45.7" width="4.7" height="2.5" fill="#808080"/><rect x="61.6" y="38.7" width="1.6" height="1.8" fill="#808080"/><rect x="73.4" y="33.2" width="13.5" height="5.2" fill="#7b0000"/><rect x="73.4" y="40.8" width="13.5" height="4.9" fill="#7b0000"/><path d="M76.7 33.2 L76.7 38.4" stroke="#000" stroke-width="1.2" fill="none" shape-rendering="auto"/><path d="M76.7 40.8 L76.7 45.7" stroke="#000" stroke-width="1.2" fill="none" shape-rendering="auto"/><path d="M80.0 33.2 L80.0 38.4" stroke="#000" stroke-width="1.2" fill="none" shape-rendering="auto"/><path d="M80.0 40.8 L80.0 45.7" stroke="#000" stroke-width="1.2" fill="none" shape-rendering="auto"/><path d="M83.4 33.2 L83.4 38.4" stroke="#000" stroke-width="1.2" fill="none" shape-rendering="auto"/><path d="M83.4 40.8 L83.4 45.7" stroke="#000" stroke-width="1.2" fill="none" shape-rendering="auto"/><path d="M85.8 33.2 L85.8 38.4" stroke="#8b0000" stroke-width="1" fill="none"/><path d="M85.8 40.8 L85.8 45.7" stroke="#8b0000" stroke-width="1" fill="none"/><rect x="69" y="23" width="11" height="2" fill="url(#hx9)"/><path d="M79.3 30.6 L79.3 28.5" stroke="#808080" stroke-width="1" fill="none"/><rect x="80.3" y="28.0" width="3.6" height="1.8" fill="#808080"/><path d="M79.3 46.2 L79.3 50.3" stroke="#808080" stroke-width="1" fill="none"/><rect x="80.3" y="49.1" width="3.6" height="1.4" fill="#808080"/><path d="M61.1 27.3 L63.2 29.6" stroke="#808080" stroke-width="1" fill="none" shape-rendering="auto"/><path d="M127.5 23.9 L173.4 23.9" stroke="#808080" stroke-width="2" fill="none"/><path d="M129.6 25.9 L173.4 25.9" stroke="#808080" stroke-width="1" fill="none"/><path d="M129.6 23.9 L129.6 66.4" stroke="#808080" stroke-width="2.2" fill="none" shape-rendering="auto"/><path d="M172.6 23.9 L172.6 66.4" stroke="#808080" stroke-width="2.2" fill="none" shape-rendering="auto"/><path d="M128.6 64.9 L173.2 64.9" stroke="#808080" stroke-width="1" fill="none"/><path d="M128.6 66.4 L173.2 66.4" stroke="#808080" stroke-width="1.6" fill="none" shape-rendering="auto"/><path d="M118.7 35.8 L129.6 35.8 L129.6 47.2 L118.7 47.2Z" stroke="#808080" stroke-width="1" fill="none"/><path d="M120.3 38.9 L125.5 38.9 L125.5 45.1 L120.3 45.1Z" stroke="#808080" stroke-width="1" fill="none"/><rect x="126.0" y="38.4" width="3.1" height="6.7" fill="#808080"/><rect x="118.2" y="37.3" width="2.1" height="2.1" fill="#808080"/><path d="M172.6 35.6 L185.9 35.6 L185.9 47.4 L172.6 47.4Z" stroke="#808080" stroke-width="1" fill="none"/><path d="M173.6 37.3 L182.9 37.3 L182.9 45.1 L173.6 45.1Z" stroke="#808080" stroke-width="1" fill="none"/><path d="M174.2 44.1 L177.3 38.9" stroke="#808080" stroke-width="1.6" fill="none" shape-rendering="auto"/><path d="M175.8 45.1 L178.9 39.9" stroke="#808080" stroke-width="1.6" fill="none" shape-rendering="auto"/><path d="M184.1 38.9 L184.1 44.1" stroke="#808080" stroke-width="1.6" fill="none" shape-rendering="auto"/><rect x="129.1" y="36.0" width="43.1" height="10.4" fill="#7b0000"/><rect x="130.4" y="41.2" width="0.7" height="0.6" fill="#ddd"/><rect x="134.9" y="41.2" width="0.7" height="0.6" fill="#ddd"/><rect x="139.4" y="41.2" width="0.7" height="0.6" fill="#ddd"/><rect x="143.9" y="41.2" width="0.7" height="0.6" fill="#ddd"/><rect x="148.5" y="41.2" width="0.6" height="0.6" fill="#ddd"/><rect x="153.0" y="41.2" width="0.6" height="0.6" fill="#ddd"/><rect x="157.5" y="41.2" width="0.6" height="0.6" fill="#ddd"/><rect x="162.0" y="41.2" width="0.6" height="0.6" fill="#ddd"/><rect x="166.5" y="41.2" width="0.6" height="0.6" fill="#ddd"/><rect x="171.0" y="41.2" width="0.6" height="0.6" fill="#ddd"/><path d="M137.9 33.2 L164.9 33.2" stroke="#808080" stroke-width="1" fill="none"/><path d="M139.5 33.2 L139.5 36.3" stroke="#808080" stroke-width="1" fill="none"/><path d="M150.4 28.5 L150.4 36.3" stroke="#808080" stroke-width="1" fill="none"/><rect x="150.9" y="28.0" width="4.1" height="1.6" fill="#808080"/><path d="M132.2 46.7 L132.2 55.0 L138.4 55.0 L138.4 46.7" stroke="#808080" stroke-width="1" fill="none"/><path d="M133.0 46.7 L133.0 54.2" stroke="#808080" stroke-width="1" fill="none"/><path d="M137.6 46.7 L137.6 54.2" stroke="#808080" stroke-width="1" fill="none"/><path d="M147.5 46.7 L147.5 55.0 L153.7 55.0 L153.7 46.7" stroke="#808080" stroke-width="1" fill="none"/><path d="M148.3 46.7 L148.3 54.2" stroke="#808080" stroke-width="1" fill="none"/><path d="M152.9 46.7 L152.9 54.2" stroke="#808080" stroke-width="1" fill="none"/><path d="M163.3 46.7 L163.3 55.0 L169.6 55.0 L169.6 46.7" stroke="#808080" stroke-width="1" fill="none"/><path d="M164.2 46.7 L164.2 54.2" stroke="#808080" stroke-width="1" fill="none"/><path d="M168.7 46.7 L168.7 54.2" stroke="#808080" stroke-width="1" fill="none"/><path d="M150.4 55.0 L150.4 66.4" stroke="#808080" stroke-width="2" fill="none"/><rect x="148.8" y="61.2" width="3.6" height="2.6" fill="#808080"/><path d="M146.2 58.1 L148.3 61.2" stroke="#808080" stroke-width="1" fill="none" shape-rendering="auto"/><rect x="145" y="18" width="12" height="4" fill="url(#hx9)"/><rect x="148.3" y="22.3" width="4.7" height="2.1" fill="#808080"/><rect x="120.3" y="49.3" width="4.1" height="2.1" fill="#808080"/><rect x="177.3" y="48.8" width="4.7" height="1.5" fill="#808080"/><path d="M62.7 88.7 L106.3 88.7" stroke="#808080" stroke-width="2.6" fill="none" shape-rendering="auto"/><path d="M62.7 131.0 L106.3 131.0" stroke="#808080" stroke-width="2.6" fill="none" shape-rendering="auto"/><path d="M63.2 86.1 L63.2 133.9" stroke="#808080" stroke-width="1.6" fill="none" shape-rendering="auto"/><path d="M105.7 87.2 L105.7 132.8" stroke="#808080" stroke-width="1.6" fill="none" shape-rendering="auto"/><path d="M108.6 87.2 L108.6 131.8" stroke="#808080" stroke-width="1" fill="none"/><path d="M105.7 87.7 L108.6 87.7" stroke="#808080" stroke-width="1" fill="none"/><path d="M105.7 131.3 L108.6 131.3" stroke="#808080" stroke-width="1" fill="none"/><rect x="77.0" y="88.2" width="10.1" height="42.5" fill="#7b0000"/><rect x="82.0" y="92.0" width="0.8" height="0.8" fill="#ddd"/><rect x="82.0" y="96.5" width="0.8" height="0.8" fill="#ddd"/><rect x="82.0" y="101.0" width="0.8" height="0.7" fill="#ddd"/><rect x="82.0" y="105.5" width="0.8" height="0.7" fill="#ddd"/><rect x="82.0" y="110.0" width="0.8" height="0.7" fill="#ddd"/><rect x="82.0" y="114.5" width="0.8" height="0.7" fill="#ddd"/><rect x="82.0" y="118.9" width="0.8" height="0.8" fill="#ddd"/><rect x="82.0" y="123.4" width="0.8" height="0.7" fill="#ddd"/><rect x="82.0" y="127.9" width="0.8" height="0.7" fill="#ddd"/><path d="M76.5 81.2 L87.6 81.2 L87.6 88.2 L76.5 88.2Z" stroke="#808080" stroke-width="1" fill="none"/><path d="M78.8 82.0 L82.4 86.6 L86.0 82.0" stroke="#808080" stroke-width="1.6" fill="none" shape-rendering="auto"/><path d="M80.3 82.0 L82.4 84.6 L84.5 82.0" stroke="#808080" stroke-width="1" fill="none" shape-rendering="auto"/><path d="M76.5 131.8 L87.9 131.8 L87.9 142.7 L76.5 142.7Z" stroke="#808080" stroke-width="1" fill="none"/><path d="M76.5 140.6 L87.9 140.6" stroke="#808080" stroke-width="1" fill="none"/><path d="M80.3 134.4 L82.4 140.1 L85.0 134.4" stroke="#808080" stroke-width="1.6" fill="none" shape-rendering="auto"/><path d="M82.4 133.3 L82.4 142.2" stroke="#808080" stroke-width="1" fill="none"/><path d="M88.1 91.5 L94.8 91.5 L96.4 93.1 L96.4 97.5 L88.1 97.5" stroke="#808080" stroke-width="1" fill="none" shape-rendering="auto"/><path d="M88.1 94.6 L94.8 94.6" stroke="#808080" stroke-width="1" fill="none"/><path d="M94.8 91.5 L94.8 97.5" stroke="#808080" stroke-width="1" fill="none"/><path d="M88.1 106.4 L94.8 106.4 L96.4 107.9 L96.4 112.4 L88.1 112.4" stroke="#808080" stroke-width="1" fill="none" shape-rendering="auto"/><path d="M88.1 109.5 L94.8 109.5" stroke="#808080" stroke-width="1" fill="none"/><path d="M94.8 106.4 L94.8 112.4" stroke="#808080" stroke-width="1" fill="none"/><path d="M88.1 122.2 L94.8 122.2 L96.4 123.8 L96.4 128.3 L88.1 128.3" stroke="#808080" stroke-width="1" fill="none" shape-rendering="auto"/><path d="M88.1 125.4 L94.8 125.4" stroke="#808080" stroke-width="1" fill="none"/><path d="M94.8 122.2 L94.8 128.3" stroke="#808080" stroke-width="1" fill="none"/><path d="M73.6 104.6 L77.0 104.6 L77.0 116.2 L73.6 116.2Z" stroke="#808080" stroke-width="1" fill="none"/><rect x="74.1" y="118.8" width="2.9" height="2.1" fill="#808080"/><rect x="65.3" y="106.9" width="4.1" height="1.5" fill="#808080"/><rect x="61.6" y="109.0" width="1.6" height="2.0" fill="#808080"/><rect x="103.7" y="107.4" width="3.1" height="5.2" fill="#808080"/><path d="M88.1 135.9 L100.5 135.9" stroke="#808080" stroke-width="1" fill="none"/><rect x="96.9" y="134.4" width="3.6" height="2.1" fill="#808080"/><path d="M99.0 106.9 L101.6 109.0" stroke="#808080" stroke-width="1" fill="none" shape-rendering="auto"/><rect x="79" y="75" width="12" height="4" fill="url(#hx9)"/><path d="M91.2 80.4 L93.3 83.0 L95.9 83.0" stroke="#808080" stroke-width="1" fill="none" shape-rendering="auto"/><path d="M128.6 79.4 L173.4 79.4" stroke="#808080" stroke-width="1" fill="none"/><path d="M127.5 82.1 L173.4 82.1" stroke="#808080" stroke-width="1" fill="none"/><path d="M129.6 79.4 L129.6 140.1" stroke="#808080" stroke-width="2.4" fill="none" shape-rendering="auto"/><path d="M172.6 79.4 L172.6 140.1" stroke="#808080" stroke-width="2.4" fill="none" shape-rendering="auto"/><path d="M137.4 82.1 L137.4 88.2" stroke="#808080" stroke-width="1" fill="none"/><path d="M163.9 82.1 L163.9 88.2" stroke="#808080" stroke-width="1" fill="none"/><path d="M115.6 86.1 L115.6 133.9" stroke="#808080" stroke-width="1" fill="none"/><path d="M118.2 86.1 L118.2 133.9" stroke="#808080" stroke-width="1.6" fill="none" shape-rendering="auto"/><path d="M115.6 88.0 L182.5 88.0" stroke="#808080" stroke-width="2.2" fill="none" shape-rendering="auto"/><path d="M115.6 131.3 L182.5 131.3" stroke="#808080" stroke-width="2.2" fill="none" shape-rendering="auto"/><path d="M118.2 104.8 L129.1 104.8" stroke="#808080" stroke-width="1" fill="none"/><path d="M118.2 115.2 L129.1 115.2" stroke="#808080" stroke-width="1" fill="none"/><rect x="129.1" y="88.2" width="43.1" height="42.8" fill="#7b0000"/><path d="M137.4 104.6 L163.9 104.6 L163.9 115.5 L137.4 115.5Z" stroke="#808080" stroke-width="1" fill="none"/><path d="M151.4 104.6 L151.4 115.5" stroke="#808080" stroke-width="1" fill="none"/><path d="M137.4 131.3 L137.4 142.2" stroke="#808080" stroke-width="1" fill="none"/><path d="M151.4 131.3 L151.4 142.2" stroke="#808080" stroke-width="1" fill="none"/><path d="M163.9 131.3 L163.9 142.2" stroke="#808080" stroke-width="1" fill="none"/><path d="M128.6 140.1 L172.7 140.1" stroke="#808080" stroke-width="1" fill="none"/><path d="M129.6 142.2 L172.7 142.2" stroke="#808080" stroke-width="1" fill="none"/><path d="M128.6 144.2 L172.7 144.2" stroke="#808080" stroke-width="1" fill="none"/><path d="M177.2 87.2 L177.2 131.8" stroke="#808080" stroke-width="1" fill="none"/><path d="M179.8 87.2 L179.8 131.8" stroke="#808080" stroke-width="1" fill="none"/><path d="M182.4 87.2 L182.4 131.8" stroke="#808080" stroke-width="1" fill="none"/><path d="M172.6 104.8 L179.8 104.8" stroke="#808080" stroke-width="1" fill="none"/><path d="M172.6 115.2 L179.8 115.2" stroke="#808080" stroke-width="1" fill="none"/><rect x="176.3" y="106.9" width="1.6" height="6.2" fill="#808080"/><rect x="146" y="74" width="5" height="6" fill="url(#hx9)"/><rect x="148.3" y="80.4" width="4.1" height="2.6" fill="#808080"/><rect x="120.3" y="107.9" width="4.6" height="1.4" fill="#808080"/><rect x="148.3" y="136.5" width="6.7" height="2.0" fill="#808080"/><rect x="148.8" y="142.7" width="3.1" height="1.5" fill="#808080"/><path d="M200.3 23.3 L222.9 23.3 L222.9 45.3 L200.3 45.3Z" stroke="#808080" stroke-width="1" fill="none"/><path d="M205.2 31.4 L218.7 31.4 L218.7 37.7 L205.2 37.7Z" stroke="#808080" stroke-width="1" fill="none"/><path d="M210.4 21.3 L210.4 23.3" stroke="#808080" stroke-width="1" fill="none"/><path d="M210.4 45.3 L210.4 47.4" stroke="#808080" stroke-width="1" fill="none"/><path d="M198.5 33.7 L200.3 33.7" stroke="#808080" stroke-width="1" fill="none"/><path d="M222.9 33.5 L224.4 33.5" stroke="#808080" stroke-width="1" fill="none"/><path d="M200.3 54.5 L222.9 54.5 L222.9 59.7 L200.3 59.7Z" stroke="#808080" stroke-width="1" fill="none"/><path d="M198.3 54.5 L224.6 54.5" stroke="#808080" stroke-width="1" fill="none"/><path d="M205.7 54.5 L205.7 51.4 L218.7 51.4 L218.7 54.5" stroke="#808080" stroke-width="1" fill="none"/><path d="M210.4 49.8 L210.4 52.9" stroke="#808080" stroke-width="1" fill="none"/><path d="M198.0 61.9 L199.5 60.7 L198.3 59.7" stroke="#808080" stroke-width="1" fill="none" shape-rendering="auto"/><path d="M221.8 61.7 L223.9 60.5" stroke="#808080" stroke-width="1" fill="none" shape-rendering="auto"/><path d="M199.5 81.7 L245.7 81.7" stroke="#808080" stroke-width="2.2" fill="none" shape-rendering="auto"/><path d="M200.0 83.5 L245.2 83.5" stroke="#808080" stroke-width="1" fill="none"/><path d="M201.1 81.5 L201.1 140.1" stroke="#808080" stroke-width="2.4" fill="none" shape-rendering="auto"/><path d="M244.1 81.5 L244.1 140.1" stroke="#808080" stroke-width="2.4" fill="none" shape-rendering="auto"/><path d="M188.6 88.0 L252.6 88.0" stroke="#808080" stroke-width="2.2" fill="none" shape-rendering="auto"/><path d="M188.6 131.3 L252.6 131.3" stroke="#808080" stroke-width="2.2" fill="none" shape-rendering="auto"/><path d="M188.6 86.6 L188.6 132.8" stroke="#808080" stroke-width="1" fill="none"/><path d="M191.0 86.6 L191.0 132.8" stroke="#808080" stroke-width="1" fill="none"/><path d="M249.8 86.6 L249.8 132.8" stroke="#808080" stroke-width="1" fill="none"/><path d="M252.6 86.6 L252.6 132.8" stroke="#808080" stroke-width="1" fill="none"/><rect x="201.1" y="88.2" width="43.0" height="42.8" fill="#7b0000"/><path d="M222.5 88.2 L222.5 140.1" stroke="#808080" stroke-width="1" fill="none"/><path d="M203.6 94.4 L207.0 91.0 L210.4 94.4 L207.0 97.9Z" stroke="#7f9090" stroke-width="1.5" fill="none" shape-rendering="auto"/><path d="M203.6 109.8 L207.0 106.4 L210.4 109.8 L207.0 113.2Z" stroke="#7f9090" stroke-width="1.5" fill="none" shape-rendering="auto"/><path d="M203.6 125.4 L207.0 121.9 L210.4 125.4 L207.0 128.8Z" stroke="#7f9090" stroke-width="1.5" fill="none" shape-rendering="auto"/><path d="M219.1 94.4 L222.5 91.0 L226.0 94.4 L222.5 97.9Z" stroke="#7f9090" stroke-width="1.5" fill="none" shape-rendering="auto"/><path d="M219.1 109.8 L222.5 106.4 L226.0 109.8 L222.5 113.2Z" stroke="#7f9090" stroke-width="1.5" fill="none" shape-rendering="auto"/><path d="M219.1 125.4 L222.5 121.9 L226.0 125.4 L222.5 128.8Z" stroke="#7f9090" stroke-width="1.5" fill="none" shape-rendering="auto"/><path d="M235.0 94.4 L238.4 91.0 L241.9 94.4 L238.4 97.9Z" stroke="#7f9090" stroke-width="1.5" fill="none" shape-rendering="auto"/><path d="M235.0 109.8 L238.4 106.4 L241.9 109.8 L238.4 113.2Z" stroke="#7f9090" stroke-width="1.5" fill="none" shape-rendering="auto"/><path d="M235.0 125.4 L238.4 121.9 L241.9 125.4 L238.4 128.8Z" stroke="#7f9090" stroke-width="1.5" fill="none" shape-rendering="auto"/><path d="M199.5 140.1 L245.7 140.1" stroke="#808080" stroke-width="1" fill="none"/><path d="M200.5 142.2 L244.7 142.2" stroke="#808080" stroke-width="1" fill="none"/><rect x="217" y="76" width="6" height="4" fill="url(#hx9)"/><rect x="220.8" y="80.9" width="3.6" height="2.4" fill="#808080"/><rect x="192.2" y="107.9" width="4.7" height="1.4" fill="#808080"/><rect x="247.2" y="107.4" width="2.1" height="5.2" fill="#808080"/><rect x="223.4" y="135.9" width="3.1" height="1.8" fill="#808080"/><rect x="187.1" y="107.9" width="1.5" height="4.2" fill="#808080"/></svg></div>
<div class="sb" style="left:325px;top:30px;width:17px;height:173px"></div>
<div class="sbb" style="left:325px;top:30px;width:17px;height:17px"><i></i><b class="u"></b></div>
<div class="sbb" style="left:325px;top:47px;width:17px;height:17px"><i></i></div>
<div class="sbb" style="left:325px;top:186px;width:17px;height:17px"><i></i><b class="d"></b></div>
<div class="sb" style="left:7px;top:203px;width:318px;height:16px"></div>
<div class="sbb" style="left:7px;top:203px;width:17px;height:16px"><i></i><b class="l"></b></div>
<div class="sbb" style="left:24px;top:203px;width:16px;height:16px"><i></i></div>
<div class="sbb" style="left:308px;top:203px;width:17px;height:16px"><i></i><b class="r"></b></div>
<div class="a" style="left:325px;top:203px;width:17px;height:16px;background:#f0f0f0"></div>
</div>
<div class="a win" style="left:705px;top:336px;width:351px;height:228px"><div class="hl"></div><div class="cap"></div>
<svg style="left:9px;top:10px" width="16" height="16" viewBox="0 0 16 16"><rect x="0" y="0" width="12" height="12" fill="#00008c"/><path d="M1 0h1v1h-1zM3 0h2v1h-2zM7 0h3v1h-3zM0 2h1v2h-1zM4 2h3v2h-3zM11 2h1v1h-1zM1 4h3v1h-3zM6 4h2v1h-2zM4 8h2v3h-2zM5 6h1v1h-1z" fill="#00e8f0"/><path d="M5 0h2v2h-2zM1 2h3v2h-3zM7 2h3v2h-3zM0 7h4v1h-4zM5 4h1v2h-1z" fill="#000"/><path d="M2 3h2v1h-2zM8 3h1v1h-1z" fill="#b89020"/><path d="M4 6h2v2h-2z" fill="#008878"/><g transform="translate(3.5 0) skewX(-10)"><text x="4.6" y="16.2" font-family="Liberation Sans,sans-serif" font-size="15.5" font-weight="bold" fill="#000" stroke="#000" stroke-width="1.1">S</text><text x="3.6" y="15.6" font-family="Liberation Sans,sans-serif" font-size="15.5" font-weight="bold" fill="#f00">S</text></g></svg>
<span class="ttl" id="w8" style="transform:scaleX(0.8738)">図面8【図面ファイル：新規作成.PSX】【...</span>
<div class="cb" style="left:240px"><u></u><svg width="29" height="15" viewBox="0 0 29 15" style="left:0;top:0"><rect x="9.5" y="6.5" width="10" height="4" rx="1" fill="#fff" stroke="#535666"/></svg></div>
<div class="cb" style="left:274px"><u></u><svg width="29" height="15" viewBox="0 0 29 15" style="left:0;top:0"><rect x="9.5" y="2.5" width="10" height="8" rx="1" fill="#fff" stroke="#535666"/><rect x="12.5" y="5.5" width="4" height="2" fill="#c8d4e4" stroke="#535666"/></svg></div>
<div class="cb" style="left:308px"><u></u><svg width="29" height="15" viewBox="0 0 29 15" style="left:0;top:0"><path d="M8.8 2.5h3.4l2.3 2.4 2.3-2.4h3.4l-3.9 4.2 3.9 4.2h-3.4l-2.3-2.4-2.3 2.4h-3.4l3.9-4.2z" fill="#fff" stroke="#535666" stroke-width="1" shape-rendering="auto"/></svg></div>
<div class="canvas" style="left:7px;top:30px;width:318px;height:173px"><svg width="318" height="173" viewBox="0 0 318 173" shape-rendering="crispEdges"><rect x="50.5" y="10.5" width="219" height="154" fill="none" stroke="#00ffff"/><rect x="58.5" y="14.5" width="207" height="147" fill="none" stroke="#ffff00"/><rect x="239.5" y="145.5" width="26" height="16" fill="none" stroke="#ffff00"/><rect x="239" y="145" width="6" height="17" fill="#ffff00"/><path d="M245 148.5h21M245 151.5h21M245 154.5h21M245 158.5h21M245 160.5h21" stroke="#ffff00"/><path d="M240 146h4v4h-4zM240 151h4v1h-4zM241 153h1v1h-1zM243 154h1v2h-1zM241 157h1v2h-1zM243 158h2v3h-2zM240 160h1v1h-1z" fill="#fff"/><path d="M253 154h5v2h-5zM261 154h2v1h-2z" fill="#fff"/><rect x="153" y="18" width="25" height="2" fill="url(#hxw)"/><rect x="164" y="18" width="3" height="2" fill="#000"/><rect x="164" y="19" width="3" height="1" fill="#fff"/><path d="M183 18h1v2h-1zM185 18h1v2h-1zM188 18h6v2h-6z" fill="#fff"/><path d="M66.8 26.7 L63.2 26.7 L63.2 23.3 L66.8 23.3 L66.8 21.5 L108.9 21.5 L108.9 23.3 L111.8 23.3 L111.8 26.7 L109.4 26.7" stroke="#808080" stroke-width="1" fill="none"/><path d="M66.8 23.5 L108.6 23.5" stroke="#8b0000" stroke-width="1.3" fill="none" shape-rendering="auto"/><path d="M66.5 23.5 L66.5 25.9" stroke="#8b0000" stroke-width="1.2" fill="none" shape-rendering="auto"/><path d="M108.6 23.5 L108.6 25.9" stroke="#8b0000" stroke-width="1.2" fill="none" shape-rendering="auto"/><rect x="86.2" y="20.2" width="2.7" height="1.3" fill="#808080"/><path d="M82.1 27.0 L83.5 28.2 L82.1 29.5" stroke="#808080" stroke-width="1" fill="none" shape-rendering="auto"/><rect x="84.4" y="27.5" width="5.5" height="1.3" fill="#808080"/><path d="M66.8 57.8 L63.2 57.8 L63.2 54.5 L66.8 54.5 L66.8 52.6 L108.9 52.6 L108.9 54.5 L111.8 54.5 L111.8 57.8 L109.4 57.8" stroke="#808080" stroke-width="1" fill="none"/><path d="M66.8 54.7 L108.6 54.7" stroke="#8b0000" stroke-width="1.3" fill="none" shape-rendering="auto"/><path d="M66.5 54.7 L66.5 57.1" stroke="#8b0000" stroke-width="1.2" fill="none" shape-rendering="auto"/><path d="M108.6 54.7 L108.6 57.1" stroke="#8b0000" stroke-width="1.2" fill="none" shape-rendering="auto"/><rect x="86.2" y="51.4" width="2.7" height="1.2" fill="#808080"/><path d="M82.1 58.1 L83.5 59.4 L82.1 60.6" stroke="#808080" stroke-width="1" fill="none" shape-rendering="auto"/><rect x="84.4" y="58.6" width="5.5" height="1.4" fill="#808080"/><path d="M66.8 31.4 L63.2 31.4 L63.2 41.5 L66.3 41.5 L66.3 43.6 L108.9 43.6 L108.9 41.5 L111.8 41.5 L111.8 31.4 L108.9 31.4" stroke="#808080" stroke-width="1" fill="none"/><path d="M66.5 32.2 L66.5 41.5 L108.6 41.5 L108.6 32.2" stroke="#8b0000" stroke-width="1.3" fill="none" shape-rendering="auto"/><rect x="110.4" y="35.3" width="1.4" height="3.1" fill="#808080"/><path d="M66.8 62.3 L63.2 62.3 L63.2 72.3 L66.3 72.3 L66.3 74.7 L108.9 74.7 L108.9 72.3 L111.8 72.3 L111.8 62.3 L108.9 62.3" stroke="#808080" stroke-width="1" fill="none"/><path d="M66.5 63.0 L66.5 72.3 L108.6 72.3 L108.6 63.0" stroke="#8b0000" stroke-width="1.3" fill="none" shape-rendering="auto"/><rect x="110.4" y="66.1" width="1.4" height="3.1" fill="#808080"/><path d="M82.1 47.2 L83.5 48.5 L82.1 49.7" stroke="#808080" stroke-width="1" fill="none" shape-rendering="auto"/><rect x="84.4" y="47.7" width="6.5" height="1.4" fill="#808080"/><path d="M82.1 77.9 L83.5 79.2 L82.1 80.4" stroke="#808080" stroke-width="1" fill="none" shape-rendering="auto"/><rect x="84.4" y="78.4" width="6.5" height="1.4" fill="#808080"/><rect x="86.2" y="73.2" width="2.7" height="1.2" fill="#808080"/><path d="M110.4 62.8 L111.8 60.9 L112.8 62.6" stroke="#808080" stroke-width="1" fill="none" shape-rendering="auto"/><path d="M112.2 21.8 L116.1 21.8" stroke="#808080" stroke-width="2" fill="none"/><path d="M116.1 21.8 L116.1 25.6 L158.7 25.6 L158.7 22.3" stroke="#808080" stroke-width="1" fill="none"/><path d="M116.3 22.5 L158.7 22.5" stroke="#8b0000" stroke-width="1.3" fill="none" shape-rendering="auto"/><rect x="159.2" y="21.3" width="2.6" height="1.6" fill="#808080"/><path d="M132.2 28.3 L133.7 29.6 L132.2 30.8" stroke="#808080" stroke-width="1" fill="none" shape-rendering="auto"/><rect x="134.5" y="28.8" width="5.5" height="1.4" fill="#808080"/><path d="M112.2 33.7 L116.1 33.7" stroke="#808080" stroke-width="2" fill="none"/><path d="M116.1 33.7 L116.1 36.7 L158.7 36.7 L158.7 34.2" stroke="#808080" stroke-width="1" fill="none"/><path d="M116.3 34.4 L158.7 34.4" stroke="#8b0000" stroke-width="1.3" fill="none" shape-rendering="auto"/><rect x="159.2" y="33.2" width="2.6" height="1.7" fill="#808080"/><path d="M132.2 40.3 L133.7 41.5 L132.2 42.7" stroke="#808080" stroke-width="1" fill="none" shape-rendering="auto"/><rect x="134.5" y="40.8" width="5.5" height="1.3" fill="#808080"/><rect x="135.8" y="24.4" width="2.1" height="1.2" fill="#808080"/><path d="M116.1 44.1 L113.5 47.7 L116.1 48.2 L116.1 51.4 L114.0 51.9 L114.0 54.5 L116.6 55.0 L114.0 56.5 L116.1 57.1 L115.6 60.7 L118.7 58.1 L118.2 55.5 L120.3 55.0 L119.7 48.2 L120.8 47.2 L118.2 46.7 L116.1 44.1" stroke="#808080" stroke-width="1" fill="none" shape-rendering="auto"/><path d="M116.9 46.7 L116.9 55.5" stroke="#8b0000" stroke-width="1.3" fill="none" shape-rendering="auto"/><rect x="114.0" y="61.9" width="6.1" height="1.9" fill="#808080"/><rect x="63" y="18" width="5" height="2" fill="url(#hxa)"/></svg></div>
<div class="sb" style="left:325px;top:30px;width:17px;height:173px"></div>
<div class="sbb" style="left:325px;top:30px;width:17px;height:17px"><i></i><b class="u"></b></div>
<div class="sbb" style="left:325px;top:47px;width:17px;height:17px"><i></i></div>
<div class="sbb" style="left:325px;top:186px;width:17px;height:17px"><i></i><b class="d"></b></div>
<div class="sb" style="left:7px;top:203px;width:318px;height:16px"></div>
<div class="sbb" style="left:7px;top:203px;width:17px;height:16px"><i></i><b class="l"></b></div>
<div class="sbb" style="left:24px;top:203px;width:16px;height:16px"><i></i></div>
<div class="sbb" style="left:308px;top:203px;width:17px;height:16px"><i></i><b class="r"></b></div>
<div class="a" style="left:325px;top:203px;width:17px;height:16px;background:#f0f0f0"></div>
</div>
<div class="a win" style="left:705px;top:564px;width:351px;height:228px"><div class="hl"></div><div class="cap"></div>
<svg style="left:9px;top:10px" width="16" height="16" viewBox="0 0 16 16"><rect x="0" y="0" width="12" height="12" fill="#00008c"/><path d="M1 0h1v1h-1zM3 0h2v1h-2zM7 0h3v1h-3zM0 2h1v2h-1zM4 2h3v2h-3zM11 2h1v1h-1zM1 4h3v1h-3zM6 4h2v1h-2zM4 8h2v3h-2zM5 6h1v1h-1z" fill="#00e8f0"/><path d="M5 0h2v2h-2zM1 2h3v2h-3zM7 2h3v2h-3zM0 7h4v1h-4zM5 4h1v2h-1z" fill="#000"/><path d="M2 3h2v1h-2zM8 3h1v1h-1z" fill="#b89020"/><path d="M4 6h2v2h-2z" fill="#008878"/><g transform="translate(3.5 0) skewX(-10)"><text x="4.6" y="16.2" font-family="Liberation Sans,sans-serif" font-size="15.5" font-weight="bold" fill="#000" stroke="#000" stroke-width="1.1">S</text><text x="3.6" y="15.6" font-family="Liberation Sans,sans-serif" font-size="15.5" font-weight="bold" fill="#f00">S</text></g></svg>
<span class="ttl" id="w9" style="transform:scaleX(0.8738)">図面9【図面ファイル：新規作成.PSX】【...</span>
<div class="cb" style="left:240px"><u></u><svg width="29" height="15" viewBox="0 0 29 15" style="left:0;top:0"><rect x="9.5" y="6.5" width="10" height="4" rx="1" fill="#fff" stroke="#535666"/></svg></div>
<div class="cb" style="left:274px"><u></u><svg width="29" height="15" viewBox="0 0 29 15" style="left:0;top:0"><rect x="9.5" y="2.5" width="10" height="8" rx="1" fill="#fff" stroke="#535666"/><rect x="12.5" y="5.5" width="4" height="2" fill="#c8d4e4" stroke="#535666"/></svg></div>
<div class="cb" style="left:308px"><u></u><svg width="29" height="15" viewBox="0 0 29 15" style="left:0;top:0"><path d="M8.8 2.5h3.4l2.3 2.4 2.3-2.4h3.4l-3.9 4.2 3.9 4.2h-3.4l-2.3-2.4-2.3 2.4h-3.4l3.9-4.2z" fill="#fff" stroke="#535666" stroke-width="1" shape-rendering="auto"/></svg></div>
<div class="canvas" style="left:7px;top:30px;width:318px;height:173px"><svg width="318" height="173" viewBox="0 0 318 173" shape-rendering="crispEdges"><rect x="50.5" y="10.5" width="219" height="154" fill="none" stroke="#00ffff"/><rect x="58.5" y="14.5" width="207" height="147" fill="none" stroke="#ffff00"/><rect x="239.5" y="145.5" width="26" height="16" fill="none" stroke="#ffff00"/><rect x="239" y="145" width="6" height="17" fill="#ffff00"/><path d="M245 148.5h21M245 151.5h21M245 154.5h21M245 158.5h21M245 160.5h21" stroke="#ffff00"/><path d="M240 146h4v4h-4zM240 151h4v1h-4zM241 153h1v1h-1zM243 154h1v2h-1zM241 157h1v2h-1zM243 158h2v3h-2zM240 160h1v1h-1z" fill="#fff"/><path d="M253 154h5v2h-5zM261 154h2v1h-2z" fill="#fff"/><rect x="153" y="18" width="25" height="2" fill="url(#hxw)"/><rect x="164" y="18" width="3" height="2" fill="#000"/><rect x="164" y="19" width="3" height="1" fill="#fff"/><rect x="63.0" y="23.1" width="46.1" height="37.8" fill="#fff"/><path d="M64.0 24.9H108.1" stroke="#000" stroke-width="1.8" stroke-dasharray="0.00 1.25 1.04 2.59 4.67 2.08 1.04 0.83 1.04 0.83 1.04 1.25 1.04 3.11 1.25 0.83 2.08 2.59 1.25 0.83 2.08 1.87 1.04 1.25 1.04 1.04 3.94 62.27"/><path d="M64.0 27.3H108.1" stroke="#000" stroke-width="0.9" stroke-dasharray="0.00 1.25 1.04 2.59 4.67 2.08 1.04 0.83 1.04 0.83 1.04 1.25 1.04 3.11 1.25 0.83 2.08 2.59 1.25 0.83 2.08 1.87 1.04 1.25 1.04 1.04 3.94 62.27"/><path d="M64.0 29.6H108.1" stroke="#000" stroke-width="0.9" stroke-dasharray="0.00 1.25 1.04 2.59 4.67 2.08 1.04 0.83 1.04 0.83 1.04 1.25 1.04 3.11 1.25 0.83 2.08 2.59 1.25 0.83 2.08 1.87 1.04 1.25 1.04 1.04 3.94 62.27"/><path d="M64.0 32.5H108.1" stroke="#000" stroke-width="0.9" stroke-dasharray="0.00 1.25 1.04 2.59 4.67 2.08 1.04 0.83 1.04 0.83 1.04 1.25 1.04 3.11 1.25 0.83 2.08 2.59 1.25 0.83 2.08 1.87 1.04 1.25 1.04 1.04 3.94 62.27"/><path d="M64.0 34.5H108.1" stroke="#000" stroke-width="0.9" stroke-dasharray="0.00 1.25 1.04 2.59 4.67 2.08 1.04 0.83 1.04 0.83 1.04 1.25 1.04 3.11 1.25 0.83 2.08 2.59 1.25 0.83 2.08 1.87 1.04 1.25 1.04 1.04 3.94 62.27"/><path d="M64.0 36.6H108.1" stroke="#000" stroke-width="0.9" stroke-dasharray="0.00 1.25 1.04 2.59 4.67 2.08 1.04 0.83 1.04 0.83 1.04 1.25 1.04 3.11 1.25 0.83 2.08 2.59 1.25 0.83 2.08 1.87 1.04 1.25 1.04 1.04 3.94 62.27"/><path d="M64.0 38.7H108.1" stroke="#000" stroke-width="0.9" stroke-dasharray="0.00 1.25 1.04 2.59 4.67 2.08 1.04 0.83 1.04 0.83 1.04 1.25 1.04 3.11 1.25 0.83 2.08 2.59 1.25 0.83 2.08 1.87 1.04 1.25 1.04 1.04 3.94 62.27"/><path d="M64.0 41.5H108.1" stroke="#000" stroke-width="0.9" stroke-dasharray="0.00 1.25 1.04 2.59 4.67 2.08 1.04 0.83 1.04 0.83 1.04 1.25 1.04 3.11 1.25 0.83 2.08 2.59 1.25 0.83 2.08 1.87 1.04 1.25 1.04 1.04 3.94 62.27"/><path d="M64.0 43.6H108.1" stroke="#000" stroke-width="0.9" stroke-dasharray="0.00 1.25 1.04 2.59 4.67 2.08 1.04 0.83 1.04 0.83 1.04 1.25 1.04 3.11 1.25 0.83 2.08 2.59 1.25 0.83 2.08 1.87 1.04 1.25 1.04 1.04 3.94 62.27"/><path d="M64.0 45.7H108.1" stroke="#000" stroke-width="0.9" stroke-dasharray="0.00 1.25 1.04 2.59 4.67 2.08 1.04 0.83 1.04 0.83 1.04 1.25 1.04 3.11 1.25 0.83 2.08 2.59 1.25 0.83 2.08 1.87 1.04 1.25 1.04 1.04 3.94 62.27"/><path d="M64.0 47.7H108.1" stroke="#000" stroke-width="0.9" stroke-dasharray="0.00 1.25 1.04 2.59 4.67 2.08 1.04 0.83 1.04 0.83 1.04 1.25 1.04 3.11 1.25 0.83 2.08 2.59 1.25 0.83 2.08 1.87 1.04 1.25 1.04 1.04 3.94 62.27"/><path d="M64.0 49.8H108.1" stroke="#000" stroke-width="0.9" stroke-dasharray="0.00 1.25 1.04 2.59 4.67 2.08 1.04 0.83 1.04 0.83 1.04 1.25 1.04 3.11 1.25 0.83 2.08 2.59 1.25 0.83 2.08 1.87 1.04 1.25 1.04 1.04 3.94 62.27"/><path d="M64.0 52.4H108.1" stroke="#000" stroke-width="0.9" stroke-dasharray="0.00 0.21 7.78 2.08 5.19 2.59 6.23 3.11 4.15 3.63 7.26 62.27"/><path d="M64.0 54.5H108.1" stroke="#000" stroke-width="0.9" stroke-dasharray="0.00 0.21 7.78 2.08 5.19 2.59 6.23 3.11 4.15 3.63 7.26 62.27"/><path d="M64.0 56.5H108.1" stroke="#000" stroke-width="0.9" stroke-dasharray="60"/><path d="M64.0 58.6H108.1" stroke="#000" stroke-width="0.9" stroke-dasharray="0.00 0.21 7.78 2.08 5.19 2.59 6.23 3.11 4.15 3.63 7.26 62.27"/><rect x="115.1" y="23.1" width="45.8" height="17.9" fill="#fff"/><path d="M116.1 24.9H159.9" stroke="#000" stroke-width="1.8" stroke-dasharray="0.00 1.25 1.04 2.28 1.25 0.83 1.04 0.83 3.11 2.28 1.04 0.83 2.08 2.28 1.25 4.15 1.25 4.15 1.25 0.83 2.59 1.56 4.15 62.27"/><path d="M116.1 27.3H159.9" stroke="#000" stroke-width="0.9" stroke-dasharray="0.00 1.25 1.04 2.28 1.25 0.83 1.04 0.83 3.11 2.28 1.04 0.83 2.08 2.28 1.25 4.15 1.25 4.15 1.25 0.83 2.59 1.56 4.15 62.27"/><path d="M116.1 29.6H159.9" stroke="#000" stroke-width="0.9" stroke-dasharray="0.00 1.25 1.04 2.28 1.25 0.83 1.04 0.83 3.11 2.28 1.04 0.83 2.08 2.28 1.25 4.15 1.25 4.15 1.25 0.83 2.59 1.56 4.15 62.27"/><path d="M116.1 32.5H159.9" stroke="#000" stroke-width="0.9" stroke-dasharray="0.00 0.21 24.91 2.08 6.23 3.63 7.26 62.27"/><path d="M116.1 34.3H159.9" stroke="#000" stroke-width="0.9" stroke-dasharray="0.00 0.21 24.91 2.08 6.23 3.63 7.26 62.27"/><path d="M116.1 36.3H159.9" stroke="#000" stroke-width="0.9" stroke-dasharray="60"/><path d="M116.1 38.6H159.9" stroke="#000" stroke-width="0.9" stroke-dasharray="0.00 0.21 24.91 2.08 6.23 3.63 7.26 62.27"/><rect x="63" y="20" width="6" height="2" fill="url(#hxd)"/><rect x="167.1" y="23.1" width="45.9" height="27.7" fill="#fff"/><path d="M168.1 24.9H212.0" stroke="#000" stroke-width="1.8" stroke-dasharray="0.00 1.25 2.08 2.28 1.04 0.83 2.59 2.08 1.25 2.28 1.25 1.04 2.08 2.28 1.25 1.04 1.04 4.15 1.25 1.04 2.59 1.25 1.25 1.04 3.94 62.27"/><path d="M168.1 27.3H212.0" stroke="#000" stroke-width="0.9" stroke-dasharray="0.00 1.25 2.08 2.28 1.04 0.83 2.59 2.08 1.25 2.28 1.25 1.04 2.08 2.28 1.25 1.04 1.04 4.15 1.25 1.04 2.59 1.25 1.25 1.04 3.94 62.27"/><path d="M168.1 29.6H212.0" stroke="#000" stroke-width="0.9" stroke-dasharray="0.00 1.25 2.08 2.28 1.04 0.83 2.59 2.08 1.25 2.28 1.25 1.04 2.08 2.28 1.25 1.04 1.04 4.15 1.25 1.04 2.59 1.25 1.25 1.04 3.94 62.27"/><path d="M168.1 32.5H212.0" stroke="#000" stroke-width="0.9" stroke-dasharray="0.00 1.25 2.08 2.28 1.04 0.83 2.59 2.08 1.25 2.28 1.25 1.04 2.08 2.28 1.25 1.04 1.04 4.15 1.25 1.04 2.59 1.25 1.25 1.04 3.94 62.27"/><path d="M168.1 34.5H212.0" stroke="#000" stroke-width="0.9" stroke-dasharray="0.00 1.25 2.08 2.28 1.04 0.83 2.59 2.08 1.25 2.28 1.25 1.04 2.08 2.28 1.25 1.04 1.04 4.15 1.25 1.04 2.59 1.25 1.25 1.04 3.94 62.27"/><path d="M168.1 36.6H212.0" stroke="#000" stroke-width="0.9" stroke-dasharray="0.00 1.25 2.08 2.28 1.04 0.83 2.59 2.08 1.25 2.28 1.25 1.04 2.08 2.28 1.25 1.04 1.04 4.15 1.25 1.04 2.59 1.25 1.25 1.04 3.94 62.27"/><path d="M168.1 38.7H212.0" stroke="#000" stroke-width="0.9" stroke-dasharray="0.00 1.25 2.08 2.28 1.04 0.83 2.59 2.08 1.25 2.28 1.25 1.04 2.08 2.28 1.25 1.04 1.04 4.15 1.25 1.04 2.59 1.25 1.25 1.04 3.94 62.27"/><path d="M168.1 41.5H212.0" stroke="#000" stroke-width="0.9" stroke-dasharray="0.00 0.21 24.91 2.28 5.19 4.67 7.26 62.27"/><path d="M168.1 43.6H212.0" stroke="#000" stroke-width="0.9" stroke-dasharray="0.00 0.21 24.91 2.28 5.19 4.67 7.26 62.27"/><path d="M168.1 45.7H212.0" stroke="#000" stroke-width="0.9" stroke-dasharray="60"/><path d="M168.1 47.7H212.0" stroke="#000" stroke-width="0.9" stroke-dasharray="0.00 0.21 24.91 2.28 5.19 4.67 7.26 62.27"/><path d="M168.1 49.8H212.0" stroke="#000" stroke-width="0.9" stroke-dasharray="60"/><rect x="219.2" y="23.1" width="45.7" height="18.9" fill="#fff"/><path d="M220.2 24.4H263.9" stroke="#000" stroke-width="0.9" stroke-dasharray="0.00 0.31 6.75 2.28 5.71 2.28 5.71 3.11 6.75 3.94 6.75 62.27"/><path d="M220.2 26.5H263.9" stroke="#000" stroke-width="0.9" stroke-dasharray="0.00 0.31 6.75 2.28 5.71 2.28 5.71 3.11 6.75 3.94 6.75 62.27"/><path d="M220.2 29.0H263.9" stroke="#000" stroke-width="0.9" stroke-dasharray="0.00 0.31 6.75 2.28 5.71 2.28 5.71 3.11 6.75 3.94 6.75 62.27"/><path d="M220.2 31.1H263.9" stroke="#000" stroke-width="0.9" stroke-dasharray="0.00 0.31 6.75 2.28 5.71 2.28 5.71 3.11 6.75 3.94 6.75 62.27"/><path d="M220.2 33.2H263.9" stroke="#000" stroke-width="0.9" stroke-dasharray="0.00 0.31 6.75 2.28 5.71 2.28 5.71 3.11 6.75 3.94 6.75 62.27"/><path d="M220.2 35.8H263.9" stroke="#000" stroke-width="0.9" stroke-dasharray="60"/><path d="M220.2 38.1H263.9" stroke="#000" stroke-width="0.9" stroke-dasharray="60"/><path d="M220.2 40.5H263.9" stroke="#000" stroke-width="0.9" stroke-dasharray="60"/><rect x="219" y="21" width="5" height="2" fill="url(#hxd)"/></svg></div>
<div class="sb" style="left:325px;top:30px;width:17px;height:173px"></div>
<div class="sbb" style="left:325px;top:30px;width:17px;height:17px"><i></i><b class="u"></b></div>
<div class="sbb" style="left:325px;top:47px;width:17px;height:17px"><i></i></div>
<div class="sbb" style="left:325px;top:186px;width:17px;height:17px"><i></i><b class="d"></b></div>
<div class="sb" style="left:7px;top:203px;width:318px;height:16px"></div>
<div class="sbb" style="left:7px;top:203px;width:17px;height:16px"><i></i><b class="l"></b></div>
<div class="sbb" style="left:24px;top:203px;width:16px;height:16px"><i></i></div>
<div class="sbb" style="left:308px;top:203px;width:17px;height:16px"><i></i><b class="r"></b></div>
<div class="a" style="left:325px;top:203px;width:17px;height:16px;background:#f0f0f0"></div>
</div>
<div class="a" style="left:1px;top:794px;width:1058px;height:1px;background:#fff"></div>
<div class="a grip" style="left:6px;top:797px;height:56px"></div>
<div class="a grip" style="left:9px;top:797px;height:56px"></div>
<div class="a btn" style="left:16px;top:800px;width:22px;height:21px"><i></i></div>
<span class="t" id="t24" style="left:20.3px;top:803.0px;font-size:13px;line-height:13px;height:13px;transform:scaleX(0.9692);">履</span>
<div class="a sunk" style="left:42px;top:799px;width:245px;height:19px"><i></i></div>
<div class="a dd" style="left:269px;top:801px;width:16px;height:15px"><i></i><b></b></div>
<div class="a btn" style="left:16px;top:822px;width:22px;height:23px"><i></i></div>
<svg class="a" style="left:16px;top:822px" width="24" height="24" viewBox="0 0 24 24" shape-rendering="crispEdges"><path d="M1 2.5h8v2h-8zM7 4.5h2v7.5h-2zM3 10h4v2h-4z" fill="#00f"/><path d="M4.2 8.2v5.6L.8 11z" fill="#00f" shape-rendering="auto"/><path d="M5.8 15.5v4.5M3.5 17.8h4.6" stroke="#00f" stroke-width="1.2"/><path d="M3 5.5h1v1h-1zM3 7.5h1v1h-1zM11 3h1v1h-1zM13 3h1v1h-1zM13 5h1v1h-1z" fill="#000"/><circle cx="13" cy="12" r="4.9" fill="#9ff" stroke="#000" stroke-width="1.1" shape-rendering="auto"/><path d="M10 9.5h1v1h-1zM12 9.5h1v1h-1zM14 9.5h1v1h-1zM11 11.5h1v1h-1zM13 11.5h1v1h-1zM15 11.5h1v1h-1zM10 13.5h1v1h-1zM12 13.5h1v1h-1zM14 13.5h1v1h-1z" fill="#fff"/><path d="M16.5 15.8l4.3 4.7" stroke="#000" stroke-width="2" shape-rendering="auto"/></svg>
<div class="a sunk" style="left:42px;top:821px;width:245px;height:19px"><i></i></div>
<div class="a dd" style="left:269px;top:823px;width:16px;height:15px"><i></i><b></b></div>
<div class="a" style="left:39px;top:798px;width:1px;height:46px;background:#a0a0a0"></div><div class="a" style="left:40px;top:798px;width:1px;height:46px;background:#fff"></div>
<div class="a" style="left:289px;top:798px;width:1px;height:46px;background:#a0a0a0"></div><div class="a" style="left:290px;top:798px;width:1px;height:46px;background:#fff"></div>
<div class="a" style="left:291px;top:799px;width:764px;height:20px;border:1px solid;border-color:#a0a0a0 #fff #fff #a0a0a0"></div>
<div class="a sunk" style="left:291px;top:820px;width:763px;height:18px"><i></i></div>
<div class="a dd" style="left:1034px;top:822px;width:16px;height:14px"><i></i><b></b></div>
<div class="a" style="left:13px;top:843px;width:1043px;height:1px;background:#a0a0a0"></div><div class="a" style="left:13px;top:844px;width:1043px;height:1px;background:#fff"></div>
<div class="a" style="left:1px;top:853px;width:1058px;height:1px;background:#a0a0a0"></div><div class="a" style="left:1px;top:854px;width:1058px;height:1px;background:#fff"></div>
<div class="a" style="left:1px;top:858px;width:1058px;height:1px;background:#a0a0a0"></div><div class="a" style="left:1px;top:859px;width:1058px;height:1px;background:#fff"></div>
<div class="a btn" style="left:2px;top:860px;width:79px;height:23px"><i></i></div>
<span class="t" id="t25" style="left:11.5px;top:865.0px;font-size:13px;line-height:13px;height:13px;transform:scaleX(0.9000);color:#a0a0a0;text-shadow:1px 1px 0 #fff">図面モード</span>
<div class="a btn" style="left:82px;top:860px;width:81px;height:23px"><i></i></div>
<span class="t" id="t26" style="left:85.5px;top:865.0px;font-size:13px;line-height:13px;height:13px;transform:scaleX(0.9103);color:#a0a0a0;text-shadow:1px 1px 0 #fff">朱書きモード</span>
<div class="a" style="left:166px;top:859px;width:1px;height:25px;background:#a0a0a0"></div><div class="a" style="left:167px;top:859px;width:1px;height:25px;background:#fff"></div>
<div class="a btn" style="left:171px;top:861px;width:23px;height:22px"><i></i></div>
<span class="t" id="t27" style="left:175.7px;top:865.0px;font-size:13px;line-height:13px;height:13px;transform:scaleX(0.9077);">詳</span>
<div class="a btn" style="left:195px;top:861px;width:40px;height:22px"><i></i></div>
<span class="t" id="t28" style="left:202.0px;top:865.0px;font-size:13px;line-height:13px;height:13px;transform:scaleX(0.9577);">実寸</span>
<div class="a btn" style="left:237px;top:861px;width:80px;height:22px"><i></i></div>
<span class="t" id="t29" style="left:243.5px;top:865.0px;font-size:13px;line-height:13px;height:13px;transform:scaleX(0.9231);">絶対(Ｘ,Ｙ)</span>
<div class="a btn" style="left:319px;top:861px;width:22px;height:22px"><i></i></div>
<div class="a" style="left:321px;top:866px;width:18px;height:15px;background:#a0a0a0"></div>
<span class="t " style="left:326px;top:868px;color:#fff;font-size:11px">×</span>
<div class="a btn" style="left:343px;top:861px;width:22px;height:22px"><i></i></div>
<span class="t" id="t30" style="left:347.3px;top:865.0px;font-size:13px;line-height:13px;height:13px;transform:scaleX(0.9923);color:#a0a0a0;text-shadow:1px 1px 0 #fff">後</span>
<div class="a" style="left:369px;top:863px;width:665px;height:19px;border:1px solid;border-color:#a0a0a0 #fff #fff #a0a0a0"></div>
<span class="t" id="t31" style="left:377.1px;top:865.0px;font-size:13px;line-height:13px;height:13px;transform:scaleX(0.9186);">( X : 1022.2143, Y : 478.2857 )</span>
<svg class="a" style="left:1044px;top:870px" width="14" height="14" viewBox="0 0 14 14"><path d="M13 2L2 13M13 6L6 13M13 10l-3 3" stroke="#a0a0a0" stroke-width="1.2"/><path d="M13 3L3 13M13 7L7 13M13 11l-2 2" stroke="#fff" stroke-width="1"/></svg>
<div class="a" style="left:0;top:0;width:1px;height:886px;background:#55aefc"></div>
<div class="a" style="left:1058px;top:0;width:2px;height:886px;background:#55aefc"></div>
<div class="a" style="left:0;top:885px;width:1060px;height:1px;background:#55aefc"></div>
</body></html>
